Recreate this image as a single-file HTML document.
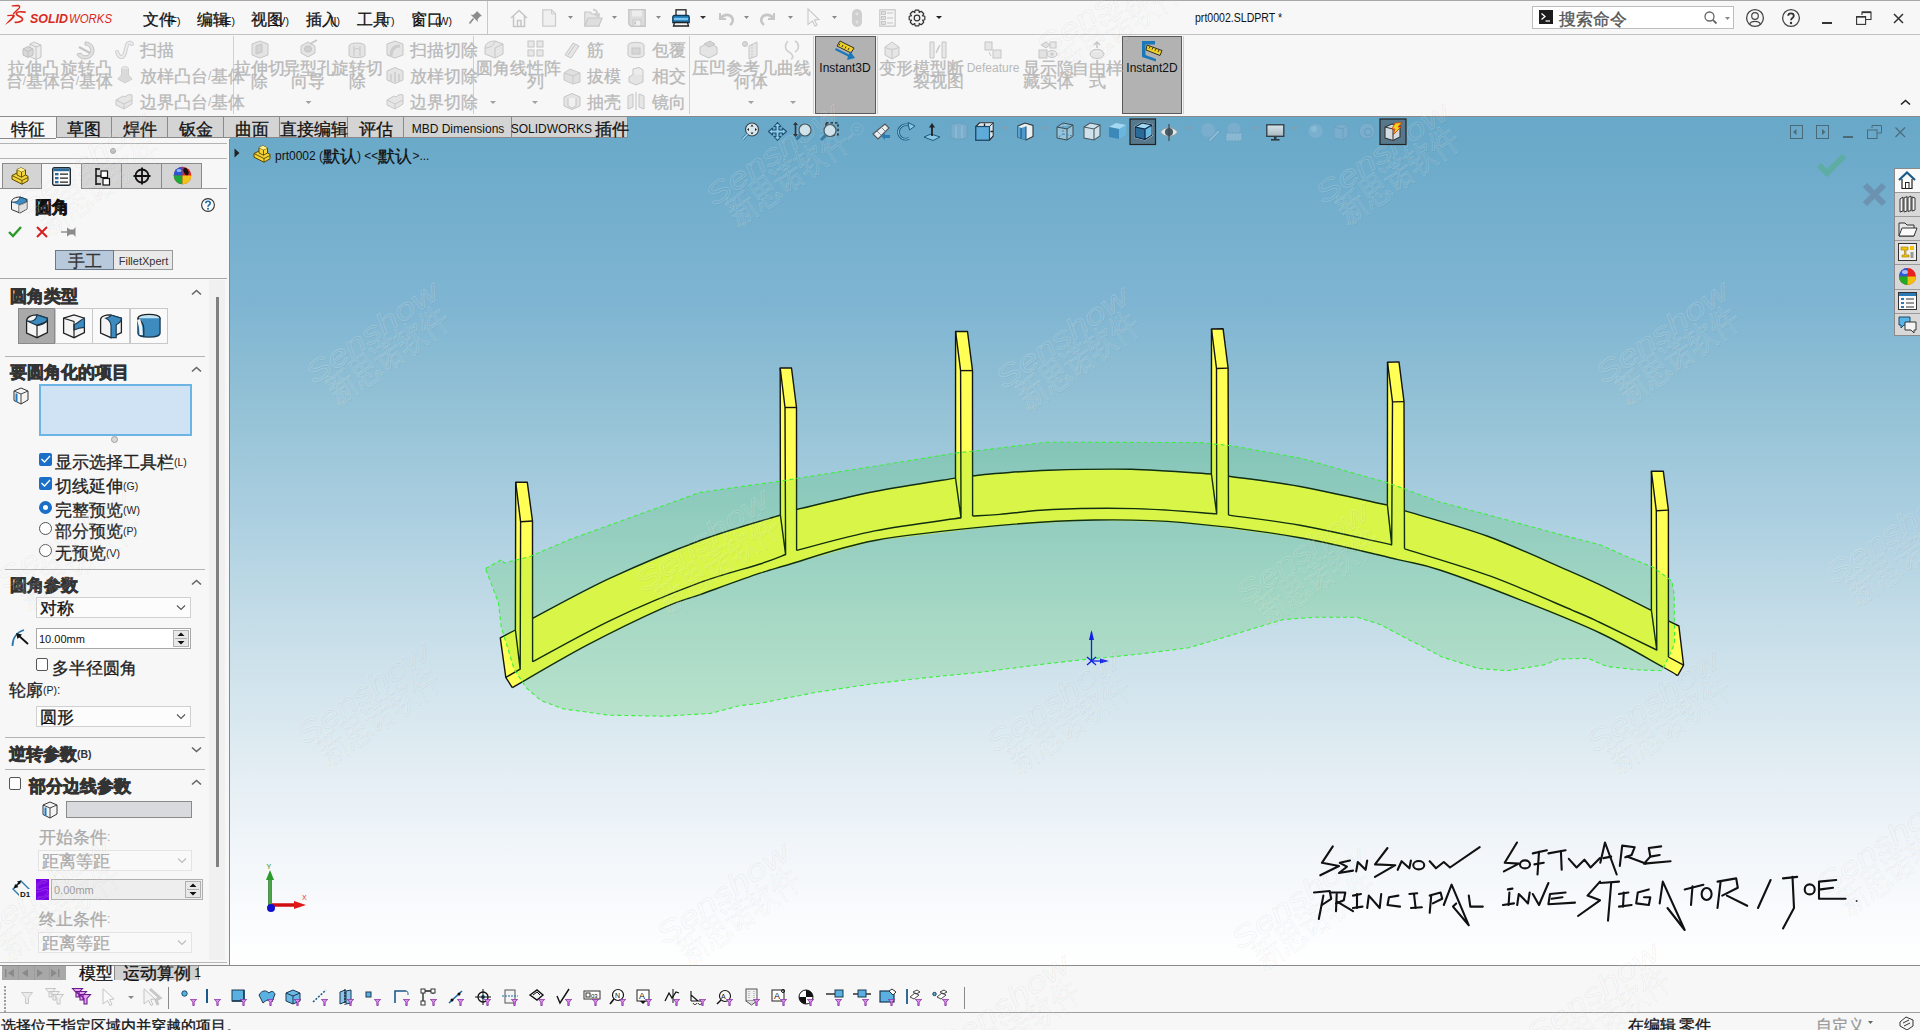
<!DOCTYPE html>
<html><head><meta charset="utf-8"><title>SOLIDWORKS</title>
<style>
html,body{margin:0;padding:0}
body{width:1920px;height:1030px;overflow:hidden;position:relative;background:#f7f7f7;font-family:"Liberation Sans",sans-serif}
body>div{position:absolute}
.t{white-space:nowrap}
.c{line-height:0;vertical-align:-1.5px;-webkit-text-stroke:0.3px currentColor}
.b .c{-webkit-text-stroke:0.75px currentColor}
</style></head><body>
<div style="left:0px;top:0px;width:1920px;height:1px;background:#a8a8a8;"></div>
<div style="left:0px;top:34px;width:1920px;height:1px;background:#c2c2c2;"></div>
<div style="left:487px;top:1px;width:1px;height:33px;background:#c8c8c8;"></div>
<div style="left:0px;top:116px;width:1920px;height:1px;background:#8a8a8a;"></div>
<div style="left:233px;top:36px;width:1px;height:78px;background:#d0d0d0;"></div>
<div style="left:473px;top:36px;width:1px;height:78px;background:#d0d0d0;"></div>
<div style="left:689px;top:36px;width:1px;height:78px;background:#d0d0d0;"></div>
<div style="left:813px;top:36px;width:1px;height:78px;background:#d0d0d0;"></div>
<div style="left:877px;top:36px;width:1px;height:78px;background:#d0d0d0;"></div>
<div style="left:815px;top:36px;width:59px;height:76px;background:#b2b2b2;border:1px solid #5a5a5a"></div>
<div style="left:1122px;top:36px;width:58px;height:76px;background:#b2b2b2;border:1px solid #5a5a5a"></div>
<div style="left:1183px;top:36px;width:1px;height:78px;background:#d0d0d0;"></div>
<div style="left:230px;top:117px;width:1690px;height:848px;background:linear-gradient(to bottom,#68a8c8 0px,#7fb5d2 188px,#93c1d5 286px,#aacee0 393px,#c5dde8 506px,#e0ecf2 638px,#f2f6fa 736px,#fcfdfe 823px,#ffffff 848px)"></div>
<svg style="position:absolute;left:0;top:0" width="1920" height="1030" viewBox="0 0 1920 1030"><polygon points="500.3,637.8 515.4,630.0 532.6,618.4 609.1,578.7 701.4,540.0 780.4,515.1 785.0,515.0 796.6,509.5 874.7,491.5 955.5,478.1 972.6,475.8 1000.0,473.2 1048.9,470.2 1131.0,469.3 1211.4,474.0 1228.5,476.3 1300.0,486.5 1387.4,505.1 1404.5,510.7 1487.0,536.0 1567.3,570.1 1600.0,584.9 1651.4,610.4 1668.4,620.9 1678.9,626.0 1683.6,665.2 1677.7,675.7 1663.8,667.5 1677.7,675.7 1663.8,667.5 1600.0,633.0 1520.2,599.8 1439.8,570.0 1397.9,559.6 1300.0,537.7 1183.5,522.6 1094.4,520.0 1000.0,525.4 874.7,540.5 787.4,565.0 760.0,573.2 700.0,594.6 664.5,607.3 587.0,645.1 512.3,687.6 505.8,677.4" fill="#ffff55"/>
<polygon points="515.7,482.3 527.3,482.3 532.5,521.0 532.6,661.7 520.2,669.1 515.4,630.0" fill="#ffff55"/>
<polygon points="780.2,368.0 791.5,368.0 796.5,407.5 796.6,550.4 785.6,554.5 780.4,515.1" fill="#ffff55"/>
<polygon points="955.6,331.5 967.5,331.5 972.5,370.6 972.6,516.0 961.0,517.8 955.5,478.1" fill="#ffff55"/>
<polygon points="1211.5,329.0 1223.1,328.8 1228.1,368.1 1228.5,515.1 1216.7,513.9 1211.4,474.0" fill="#ffff55"/>
<polygon points="1387.5,362.2 1399.0,361.9 1404.0,401.6 1404.5,548.8 1391.7,544.7 1387.4,505.1" fill="#ffff55"/>
<polygon points="1651.4,471.2 1663.3,471.2 1668.4,510.1 1668.4,657.0 1656.8,650.0 1651.4,610.4" fill="#ffff55"/>
<path d="M532.6,618.4 C545.4,611.8 581.0,591.8 609.1,578.7 C637.2,565.6 672.9,550.6 701.4,540.0 C729.9,529.4 767.2,519.2 780.4,515.1" fill="none" stroke="#141414" stroke-width="1.4" stroke-linejoin="round"/>
<path d="M796.6,509.5 C809.6,506.5 848.2,496.7 874.7,491.5 C901.2,486.3 942.0,480.3 955.5,478.1" fill="none" stroke="#141414" stroke-width="1.4" stroke-linejoin="round"/>
<path d="M972.6,475.8 C977.2,475.4 987.3,474.1 1000.0,473.2 C1012.7,472.3 1027.1,470.8 1048.9,470.2 C1070.7,469.6 1103.9,468.7 1131.0,469.3 C1158.1,469.9 1198.0,473.2 1211.4,474.0" fill="none" stroke="#141414" stroke-width="1.4" stroke-linejoin="round"/>
<path d="M1228.5,476.3 C1240.4,478.0 1273.5,481.7 1300.0,486.5 C1326.5,491.3 1372.8,502.0 1387.4,505.1" fill="none" stroke="#141414" stroke-width="1.4" stroke-linejoin="round"/>
<path d="M1404.5,510.7 C1418.2,514.9 1459.9,526.1 1487.0,536.0 C1514.1,545.9 1548.5,562.0 1567.3,570.1 C1586.1,578.2 1586.0,578.2 1600.0,584.9 C1614.0,591.6 1642.8,606.1 1651.4,610.4" fill="none" stroke="#141414" stroke-width="1.4" stroke-linejoin="round"/>
<path d="M532.6,661.7 C546.0,654.6 585.3,632.3 612.8,619.3 C640.3,606.2 673.2,592.6 697.7,583.4 C722.2,574.2 745.4,568.8 760.0,564.0 C774.6,559.2 781.3,556.1 785.6,554.5" fill="none" stroke="#141414" stroke-width="1.4" stroke-linejoin="round"/>
<path d="M796.6,550.4 C809.6,547.1 847.3,536.3 874.7,530.9 C902.1,525.5 946.6,520.0 961.0,517.8" fill="none" stroke="#141414" stroke-width="1.4" stroke-linejoin="round"/>
<path d="M972.6,516.0 C977.2,515.7 986.7,515.5 1000.0,514.4 C1013.3,513.3 1029.8,510.5 1052.4,509.5 C1075.0,508.5 1108.0,507.9 1135.4,508.6 C1162.8,509.3 1203.2,513.0 1216.7,513.9" fill="none" stroke="#141414" stroke-width="1.4" stroke-linejoin="round"/>
<path d="M1228.5,515.1 C1240.4,516.8 1272.8,520.4 1300.0,525.3 C1327.2,530.2 1376.4,541.5 1391.7,544.7" fill="none" stroke="#141414" stroke-width="1.4" stroke-linejoin="round"/>
<path d="M1404.5,548.8 C1418.8,553.4 1462.5,566.0 1490.5,576.2 C1518.5,586.5 1554.3,602.6 1572.6,610.3 C1590.8,618.0 1586.0,615.9 1600.0,622.5 C1614.0,629.1 1647.3,645.4 1656.8,650.0" fill="none" stroke="#141414" stroke-width="1.4" stroke-linejoin="round"/>
<path d="M512.3,687.6 C524.8,680.5 561.6,658.5 587.0,645.1 C612.4,631.7 645.7,615.7 664.5,607.3 C683.3,598.9 684.1,600.3 700.0,594.6 C715.9,588.9 745.4,578.1 760.0,573.2 C774.6,568.3 768.3,570.5 787.4,565.0 C806.5,559.5 839.3,547.1 874.7,540.5 C910.1,533.9 963.4,528.8 1000.0,525.4 C1036.6,522.0 1063.8,520.5 1094.4,520.0 C1125.0,519.5 1149.2,519.6 1183.5,522.6 C1217.8,525.6 1264.3,531.5 1300.0,537.7 C1335.7,543.9 1374.6,554.2 1397.9,559.6 C1421.2,565.0 1419.4,563.3 1439.8,570.0 C1460.2,576.7 1493.5,589.3 1520.2,599.8 C1546.9,610.3 1576.1,621.7 1600.0,633.0 C1623.9,644.3 1650.8,660.4 1663.8,667.5 C1676.8,674.6 1675.4,674.3 1677.7,675.7" fill="none" stroke="#141414" stroke-width="1.4" stroke-linejoin="round"/>
<polyline points="515.4,630.0 515.7,482.3 527.3,482.3 532.5,521.0 532.6,661.7" fill="none" stroke="#141414" stroke-width="1.4" stroke-linejoin="round"/>
<polyline points="515.7,482.3 520.6,521.8 520.2,669.1 515.4,630.0" fill="none" stroke="#141414" stroke-width="1.4" stroke-linejoin="round"/>
<polyline points="520.6,521.8 532.5,521.0" fill="none" stroke="#141414" stroke-width="1.4" stroke-linejoin="round"/>
<polyline points="780.4,515.1 780.2,368.0 791.5,368.0 796.5,407.5 796.6,550.4" fill="none" stroke="#141414" stroke-width="1.4" stroke-linejoin="round"/>
<polyline points="780.2,368.0 785.0,407.5 785.6,554.5 780.4,515.1" fill="none" stroke="#141414" stroke-width="1.4" stroke-linejoin="round"/>
<polyline points="785.0,407.5 796.5,407.5" fill="none" stroke="#141414" stroke-width="1.4" stroke-linejoin="round"/>
<polyline points="955.5,478.1 955.6,331.5 967.5,331.5 972.5,370.6 972.6,516.0" fill="none" stroke="#141414" stroke-width="1.4" stroke-linejoin="round"/>
<polyline points="955.6,331.5 960.6,370.6 961.0,517.8 955.5,478.1" fill="none" stroke="#141414" stroke-width="1.4" stroke-linejoin="round"/>
<polyline points="960.6,370.6 972.5,370.6" fill="none" stroke="#141414" stroke-width="1.4" stroke-linejoin="round"/>
<polyline points="1211.4,474.0 1211.5,329.0 1223.1,328.8 1228.1,368.1 1228.5,515.1" fill="none" stroke="#141414" stroke-width="1.4" stroke-linejoin="round"/>
<polyline points="1211.5,329.0 1216.5,368.5 1216.7,513.9 1211.4,474.0" fill="none" stroke="#141414" stroke-width="1.4" stroke-linejoin="round"/>
<polyline points="1216.5,368.5 1228.1,368.1" fill="none" stroke="#141414" stroke-width="1.4" stroke-linejoin="round"/>
<polyline points="1387.4,505.1 1387.5,362.2 1399.0,361.9 1404.0,401.6 1404.5,548.8" fill="none" stroke="#141414" stroke-width="1.4" stroke-linejoin="round"/>
<polyline points="1387.5,362.2 1392.5,401.9 1391.7,544.7 1387.4,505.1" fill="none" stroke="#141414" stroke-width="1.4" stroke-linejoin="round"/>
<polyline points="1392.5,401.9 1404.0,401.6" fill="none" stroke="#141414" stroke-width="1.4" stroke-linejoin="round"/>
<polyline points="1651.4,610.4 1651.4,471.2 1663.3,471.2 1668.4,510.1 1668.4,657.0" fill="none" stroke="#141414" stroke-width="1.4" stroke-linejoin="round"/>
<polyline points="1651.4,471.2 1656.3,510.8 1656.8,650.0 1651.4,610.4" fill="none" stroke="#141414" stroke-width="1.4" stroke-linejoin="round"/>
<polyline points="1656.3,510.8 1668.4,510.1" fill="none" stroke="#141414" stroke-width="1.4" stroke-linejoin="round"/>
<polyline points="515.4,630.0 500.3,637.8 505.8,677.4 520.2,669.1" fill="none" stroke="#141414" stroke-width="1.4" stroke-linejoin="round"/>
<polyline points="505.8,677.4 512.3,687.6" fill="none" stroke="#141414" stroke-width="1.4" stroke-linejoin="round"/>
<polyline points="1668.4,620.9 1678.9,626.0 1683.6,665.2 1677.7,675.7" fill="none" stroke="#141414" stroke-width="1.4" stroke-linejoin="round"/>
<polyline points="1668.4,657.0 1683.6,665.2" fill="none" stroke="#141414" stroke-width="1.4" stroke-linejoin="round"/>
<polygon points="485.5,568.6 502.1,559.4 504.0,563.0 529.8,556.6 568.5,540.0 700.0,492.4 776.9,481.6 874.7,466.2 955.5,453.1 1000.0,448.0 1047.0,442.2 1201.0,442.6 1230.6,445.7 1300.0,458.0 1387.4,482.7 1439.8,502.0 1492.2,516.0 1560.0,534.6 1600.0,544.7 1630.0,558.0 1653.3,567.3 1672.0,581.2 1674.2,595.2 1674.5,643.8 1668.0,658.3 1662.1,670.7 1638.8,670.0 1606.7,666.4 1587.7,658.3 1558.5,659.1 1544.0,664.9 1507.5,670.7 1478.3,668.5 1441.9,656.9 1420.0,645.2 1408.1,639.4 1380.0,624.4 1357.5,617.3 1314.4,617.3 1282.5,619.7 1230.0,635.6 1188.8,647.8 1136.3,654.4 1080.0,660.0 1049.4,663.4 983.8,671.9 927.5,677.5 871.3,684.0 815.0,692.5 760.0,703.3 740.0,705.6 710.6,713.4 664.5,716.2 609.1,715.2 563.0,708.8 540.9,700.5 526.1,687.6 514.1,669.1 501.2,626.7 498.4,602.7" fill="rgba(0,195,0,0.15)" stroke="#3cf03c" stroke-width="1.1" stroke-dasharray="4 3"/>
<g stroke="#1020e0" stroke-width="1.3" fill="#1020e0"><line x1="1091.5" y1="661" x2="1091.5" y2="632"/><polygon points="1089,640 1094,640 1091.5,630" stroke="none"/><line x1="1091.5" y1="661" x2="1106" y2="661"/><polygon points="1100,658.5 1100,663.5 1109,661" stroke="none"/><line x1="1087" y1="657" x2="1096" y2="665"/><line x1="1087" y1="665" x2="1096" y2="657"/></g></svg>
<div style="left:0px;top:117px;width:230px;height:22px;background:#f7f7f7;"></div>
<div class="t" style="left:-122.0px;width:300px;text-align:center;top:122.84px;font-size:12px;line-height:12px;color:#111;"><span class="c" style="font-size:17.33px">特征</span></div>
<div style="left:56px;top:117px;width:56px;height:21px;background:#d4d4d4;border-right:1px solid #8a8a8a;border-bottom:1px solid #8a8a8a;box-sizing:border-box;border-left:1px solid #8a8a8a;"></div>
<div class="t" style="left:-66.0px;width:300px;text-align:center;top:122.84px;font-size:12px;line-height:12px;color:#111;"><span class="c" style="font-size:17.33px">草图</span></div>
<div style="left:112px;top:117px;width:56px;height:21px;background:#d4d4d4;border-right:1px solid #8a8a8a;border-bottom:1px solid #8a8a8a;box-sizing:border-box;"></div>
<div class="t" style="left:-10.0px;width:300px;text-align:center;top:122.84px;font-size:12px;line-height:12px;color:#111;"><span class="c" style="font-size:17.33px">焊件</span></div>
<div style="left:168px;top:117px;width:56px;height:21px;background:#d4d4d4;border-right:1px solid #8a8a8a;border-bottom:1px solid #8a8a8a;box-sizing:border-box;"></div>
<div class="t" style="left:46.0px;width:300px;text-align:center;top:122.84px;font-size:12px;line-height:12px;color:#111;"><span class="c" style="font-size:17.33px">钣金</span></div>
<div style="left:224px;top:117px;width:56px;height:21px;background:#d4d4d4;border-right:1px solid #8a8a8a;border-bottom:1px solid #8a8a8a;box-sizing:border-box;"></div>
<div class="t" style="left:102.0px;width:300px;text-align:center;top:122.84px;font-size:12px;line-height:12px;color:#111;"><span class="c" style="font-size:17.33px">曲面</span></div>
<div style="left:280px;top:117px;width:68px;height:21px;background:#d4d4d4;border-right:1px solid #8a8a8a;border-bottom:1px solid #8a8a8a;box-sizing:border-box;"></div>
<div class="t" style="left:164.0px;width:300px;text-align:center;top:122.84px;font-size:12px;line-height:12px;color:#111;"><span class="c" style="font-size:17.33px">直接编辑</span></div>
<div style="left:348px;top:117px;width:56px;height:21px;background:#d4d4d4;border-right:1px solid #8a8a8a;border-bottom:1px solid #8a8a8a;box-sizing:border-box;"></div>
<div class="t" style="left:226.0px;width:300px;text-align:center;top:122.84px;font-size:12px;line-height:12px;color:#111;"><span class="c" style="font-size:17.33px">评估</span></div>
<div style="left:404px;top:117px;width:108px;height:21px;background:#d4d4d4;border-right:1px solid #8a8a8a;border-bottom:1px solid #8a8a8a;box-sizing:border-box;"></div>
<div class="t" style="left:308.0px;width:300px;text-align:center;top:122.84px;font-size:12px;line-height:12px;color:#111;">MBD Dimensions</div>
<div style="left:512px;top:117px;width:116px;height:21px;background:#d4d4d4;border-right:1px solid #8a8a8a;border-bottom:1px solid #8a8a8a;box-sizing:border-box;"></div>
<div class="t" style="left:420.0px;width:300px;text-align:center;top:122.84px;font-size:12px;line-height:12px;color:#111;">SOLIDWORKS <span class="c" style="font-size:17.33px">插件</span></div>
<div style="left:0px;top:138px;width:56px;height:1px;background:#8a8a8a;"></div>
<div style="left:0px;top:139px;width:229px;height:826px;background:#f7f7f7;"></div>
<div style="left:229px;top:139px;width:1px;height:827px;background:#8a8a8a;"></div>
<div style="left:0px;top:965px;width:1920px;height:1px;background:#8a8a8a;"></div>
<div style="left:0px;top:143px;width:227px;height:1px;background:#b4b4b4;"></div>
<div style="left:0px;top:158px;width:227px;height:1px;background:#b4b4b4;"></div>
<div style="left:110px;top:148px;width:6px;height:6px;border-radius:50%;background:#c4c4c4;border:1px solid #a8a8a8;box-sizing:border-box"></div>
<div style="left:2px;top:163px;width:40px;height:26px;background:#d4d4d4;border:1px solid #8a8a8a;box-sizing:border-box"></div>
<div style="left:41px;top:163px;width:41px;height:26px;border-top:1px solid #8a8a8a;box-sizing:border-box"></div>
<div style="left:81px;top:163px;width:41px;height:26px;background:#d4d4d4;border:1px solid #8a8a8a;box-sizing:border-box"></div>
<div style="left:121px;top:163px;width:41px;height:26px;background:#d4d4d4;border:1px solid #8a8a8a;box-sizing:border-box"></div>
<div style="left:161px;top:163px;width:41px;height:26px;background:#d4d4d4;border:1px solid #8a8a8a;box-sizing:border-box"></div>
<div style="left:0px;top:188px;width:41px;height:1px;background:#8a8a8a;"></div>
<div style="left:201px;top:188px;width:26px;height:1px;background:#a0a0a0;"></div>
<div style="left:0px;top:966px;width:1920px;height:64px;background:#f7f7f7;"></div>
<div style="left:0px;top:1012px;width:1920px;height:1px;background:#a0a0a0;"></div>
<div class="t" style="left:143px;top:13.34px;font-size:12px;line-height:12px;color:#111;"><span class="c" style="font-size:16.00px">文件</span></div>
<div class="t" style="left:167px;top:15.54px;font-size:10px;line-height:10px;color:#111;"><span style="font-size:10.5px">(F)</span></div>
<div class="t" style="left:197px;top:13.34px;font-size:12px;line-height:12px;color:#111;"><span class="c" style="font-size:16.00px">编辑</span></div>
<div class="t" style="left:221px;top:15.54px;font-size:10px;line-height:10px;color:#111;"><span style="font-size:10.5px">(E)</span></div>
<div class="t" style="left:251px;top:13.34px;font-size:12px;line-height:12px;color:#111;"><span class="c" style="font-size:16.00px">视图</span></div>
<div class="t" style="left:275px;top:15.54px;font-size:10px;line-height:10px;color:#111;"><span style="font-size:10.5px">(V)</span></div>
<div class="t" style="left:306px;top:13.34px;font-size:12px;line-height:12px;color:#111;"><span class="c" style="font-size:16.00px">插入</span></div>
<div class="t" style="left:330px;top:15.54px;font-size:10px;line-height:10px;color:#111;"><span style="font-size:10.5px">(I)</span></div>
<div class="t" style="left:357px;top:13.34px;font-size:12px;line-height:12px;color:#111;"><span class="c" style="font-size:16.00px">工具</span></div>
<div class="t" style="left:381px;top:15.54px;font-size:10px;line-height:10px;color:#111;"><span style="font-size:10.5px">(T)</span></div>
<div class="t" style="left:411px;top:13.34px;font-size:12px;line-height:12px;color:#111;"><span class="c" style="font-size:16.00px">窗口</span></div>
<div class="t" style="left:435px;top:15.54px;font-size:10px;line-height:10px;color:#111;"><span style="font-size:10.5px">(W)</span></div>
<div class="t" style="left:1195px;top:11.84px;font-size:12px;line-height:12px;color:#111;transform:scaleX(0.88);transform-origin:0 0">prt0002.SLDPRT *</div>
<div style="left:1532px;top:6px;width:202px;height:23px;background:#fff;border:1px solid #bdbdbd;box-sizing:border-box"></div>
<div style="left:1539px;top:10px;width:14px;height:14px;background:#1e1e1e;"></div>
<div class="t" style="left:1559px;top:12.84px;font-size:12px;line-height:12px;color:#555;"><span class="c" style="font-size:17.33px">搜索命令</span></div>
<div class="t" style="left:-117px;width:300px;text-align:center;top:61.84px;font-size:12px;line-height:12px;color:#b9b9b9;"><span class="c" style="font-size:17.33px">拉伸凸</span></div>
<div class="t" style="left:-117px;width:300px;text-align:center;top:74.84px;font-size:12px;line-height:12px;color:#b9b9b9;"><span class="c" style="font-size:17.33px">台</span>/<span class="c" style="font-size:17.33px">基体</span></div>
<div class="t" style="left:-64px;width:300px;text-align:center;top:61.84px;font-size:12px;line-height:12px;color:#b9b9b9;"><span class="c" style="font-size:17.33px">旋转凸</span></div>
<div class="t" style="left:-64px;width:300px;text-align:center;top:74.84px;font-size:12px;line-height:12px;color:#b9b9b9;"><span class="c" style="font-size:17.33px">台</span>/<span class="c" style="font-size:17.33px">基体</span></div>
<div class="t" style="left:140px;top:43.84px;font-size:12px;line-height:12px;color:#b9b9b9;"><span class="c" style="font-size:17.33px">扫描</span></div>
<div class="t" style="left:140px;top:69.84px;font-size:12px;line-height:12px;color:#b9b9b9;"><span class="c" style="font-size:17.33px">放样凸台</span>/<span class="c" style="font-size:17.33px">基体</span></div>
<div class="t" style="left:140px;top:95.84px;font-size:12px;line-height:12px;color:#b9b9b9;"><span class="c" style="font-size:17.33px">边界凸台</span>/<span class="c" style="font-size:17.33px">基体</span></div>
<div class="t" style="left:109px;width:300px;text-align:center;top:61.84px;font-size:12px;line-height:12px;color:#b9b9b9;"><span class="c" style="font-size:17.33px">拉伸切</span></div>
<div class="t" style="left:109px;width:300px;text-align:center;top:74.84px;font-size:12px;line-height:12px;color:#b9b9b9;"><span class="c" style="font-size:17.33px">除</span></div>
<div class="t" style="left:158px;width:300px;text-align:center;top:61.84px;font-size:12px;line-height:12px;color:#b9b9b9;"><span class="c" style="font-size:17.33px">异型孔</span></div>
<div class="t" style="left:158px;width:300px;text-align:center;top:74.84px;font-size:12px;line-height:12px;color:#b9b9b9;"><span class="c" style="font-size:17.33px">向导</span></div>
<div class="t" style="left:207px;width:300px;text-align:center;top:61.84px;font-size:12px;line-height:12px;color:#b9b9b9;"><span class="c" style="font-size:17.33px">旋转切</span></div>
<div class="t" style="left:207px;width:300px;text-align:center;top:74.84px;font-size:12px;line-height:12px;color:#b9b9b9;"><span class="c" style="font-size:17.33px">除</span></div>
<div class="t" style="left:410px;top:43.84px;font-size:12px;line-height:12px;color:#b9b9b9;"><span class="c" style="font-size:17.33px">扫描切除</span></div>
<div class="t" style="left:410px;top:69.84px;font-size:12px;line-height:12px;color:#b9b9b9;"><span class="c" style="font-size:17.33px">放样切除</span></div>
<div class="t" style="left:410px;top:95.84px;font-size:12px;line-height:12px;color:#b9b9b9;"><span class="c" style="font-size:17.33px">边界切除</span></div>
<div class="t" style="left:343px;width:300px;text-align:center;top:61.84px;font-size:12px;line-height:12px;color:#b9b9b9;"><span class="c" style="font-size:17.33px">圆角</span></div>
<div class="t" style="left:385px;width:300px;text-align:center;top:61.84px;font-size:12px;line-height:12px;color:#b9b9b9;"><span class="c" style="font-size:17.33px">线性阵</span></div>
<div class="t" style="left:385px;width:300px;text-align:center;top:74.84px;font-size:12px;line-height:12px;color:#b9b9b9;"><span class="c" style="font-size:17.33px">列</span></div>
<div class="t" style="left:587px;top:43.84px;font-size:12px;line-height:12px;color:#b9b9b9;"><span class="c" style="font-size:17.33px">筋</span></div>
<div class="t" style="left:587px;top:69.84px;font-size:12px;line-height:12px;color:#b9b9b9;"><span class="c" style="font-size:17.33px">拔模</span></div>
<div class="t" style="left:587px;top:95.84px;font-size:12px;line-height:12px;color:#b9b9b9;"><span class="c" style="font-size:17.33px">抽壳</span></div>
<div class="t" style="left:652px;top:43.84px;font-size:12px;line-height:12px;color:#b9b9b9;"><span class="c" style="font-size:17.33px">包覆</span></div>
<div class="t" style="left:652px;top:69.84px;font-size:12px;line-height:12px;color:#b9b9b9;"><span class="c" style="font-size:17.33px">相交</span></div>
<div class="t" style="left:652px;top:95.84px;font-size:12px;line-height:12px;color:#b9b9b9;"><span class="c" style="font-size:17.33px">镜向</span></div>
<div class="t" style="left:559px;width:300px;text-align:center;top:61.84px;font-size:12px;line-height:12px;color:#b9b9b9;"><span class="c" style="font-size:17.33px">压凹</span></div>
<div class="t" style="left:601px;width:300px;text-align:center;top:61.84px;font-size:12px;line-height:12px;color:#b9b9b9;"><span class="c" style="font-size:17.33px">参考几</span></div>
<div class="t" style="left:601px;width:300px;text-align:center;top:74.84px;font-size:12px;line-height:12px;color:#b9b9b9;"><span class="c" style="font-size:17.33px">何体</span></div>
<div class="t" style="left:644px;width:300px;text-align:center;top:61.84px;font-size:12px;line-height:12px;color:#b9b9b9;"><span class="c" style="font-size:17.33px">曲线</span></div>
<div class="t" style="left:695px;width:300px;text-align:center;top:61.84px;font-size:12px;line-height:12px;color:#111;">Instant3D</div>
<div class="t" style="left:746px;width:300px;text-align:center;top:61.84px;font-size:12px;line-height:12px;color:#b9b9b9;"><span class="c" style="font-size:17.33px">变形</span></div>
<div class="t" style="left:788px;width:300px;text-align:center;top:61.84px;font-size:12px;line-height:12px;color:#b9b9b9;"><span class="c" style="font-size:17.33px">模型断</span></div>
<div class="t" style="left:788px;width:300px;text-align:center;top:74.84px;font-size:12px;line-height:12px;color:#b9b9b9;"><span class="c" style="font-size:17.33px">裂视图</span></div>
<div class="t" style="left:843px;width:300px;text-align:center;top:61.84px;font-size:12px;line-height:12px;color:#b9b9b9;">Defeature</div>
<div class="t" style="left:898px;width:300px;text-align:center;top:61.84px;font-size:12px;line-height:12px;color:#b9b9b9;"><span class="c" style="font-size:17.33px">显示隐</span></div>
<div class="t" style="left:898px;width:300px;text-align:center;top:74.84px;font-size:12px;line-height:12px;color:#b9b9b9;"><span class="c" style="font-size:17.33px">藏实体</span></div>
<div class="t" style="left:947px;width:300px;text-align:center;top:61.84px;font-size:12px;line-height:12px;color:#b9b9b9;"><span class="c" style="font-size:17.33px">自由样</span></div>
<div class="t" style="left:947px;width:300px;text-align:center;top:74.84px;font-size:12px;line-height:12px;color:#b9b9b9;"><span class="c" style="font-size:17.33px">式</span></div>
<div class="t" style="left:1002px;width:300px;text-align:center;top:61.84px;font-size:12px;line-height:12px;color:#111;">Instant2D</div>
<div class="t" style="left:275px;top:149.84px;font-size:12px;line-height:12px;color:#111;">prt0002 (<span class="c" style="font-size:17.33px">默认</span>) &lt;&lt;<span class="c" style="font-size:17.33px">默认</span>&gt;...</div>
<div class="t b" style="left:35px;top:200.84px;font-size:12px;line-height:12px;color:#111;font-weight:bold;"><span class="c" style="font-size:17.33px">圆角</span></div>
<div style="left:55px;top:250px;width:59px;height:20px;background:#b9c9dc;border:1px solid #6a7a8a;box-sizing:border-box"></div>
<div style="left:114px;top:250px;width:59px;height:20px;background:#e9e9e9;border:1px solid #9a9a9a;border-left:none;box-sizing:border-box"></div>
<div class="t" style="left:-65.5px;width:300px;text-align:center;top:254.84px;font-size:12px;line-height:12px;color:#333;"><span class="c" style="font-size:17.33px">手工</span></div>
<div class="t" style="left:-6.5px;width:300px;text-align:center;top:255.69px;font-size:11px;line-height:11px;color:#333;">FilletXpert</div>
<div style="left:0px;top:278px;width:227px;height:1px;background:#a8a8a8;"></div>
<div style="left:209px;top:280px;width:16px;height:680px;background:#f0f0f0;"></div>
<div style="left:216px;top:297px;width:3px;height:570px;background:#808080;"></div>
<div class="t b" style="left:10px;top:289.84px;font-size:12px;line-height:12px;color:#333;font-weight:bold;"><span class="c" style="font-size:17.33px">圆角类型</span></div>
<div style="left:18px;top:308px;width:37px;height:36px;background:#a9a9a9;border:1px solid #8a8a8a;box-sizing:border-box"></div>
<div style="left:55px;top:308px;width:38px;height:36px;background:#fafafa;border:1px solid #c8c8c8;box-sizing:border-box"></div>
<div style="left:92px;top:308px;width:38px;height:36px;background:#fafafa;border:1px solid #c8c8c8;box-sizing:border-box"></div>
<div style="left:130px;top:308px;width:38px;height:36px;background:#fafafa;border:1px solid #c8c8c8;box-sizing:border-box"></div>
<div style="left:5px;top:356px;width:200px;height:1px;background:#b4b4b4;"></div>
<div class="t b" style="left:10px;top:365.84px;font-size:12px;line-height:12px;color:#333;font-weight:bold;"><span class="c" style="font-size:17.33px">要圆角化的项目</span></div>
<div style="left:39px;top:384px;width:153px;height:52px;background:#cfe3f5;border:2px solid #6cb4e6;box-sizing:border-box"></div>
<div style="left:111px;top:436px;width:7px;height:7px;border-radius:50%;background:#d8d8d8;border:1px solid #a0a0a0;box-sizing:border-box"></div>
<div style="left:39px;top:453px;width:13px;height:13px;background:#1a6fc9;border-radius:2px"></div>
<div class="t" style="left:55px;top:455.84px;font-size:12px;line-height:12px;color:#222;"><span class="c" style="font-size:17.33px">显示选择工具栏</span><span style="font-size:10.5px">(L)</span></div>
<div style="left:39px;top:477px;width:13px;height:13px;background:#1a6fc9;border-radius:2px"></div>
<div class="t" style="left:55px;top:479.84px;font-size:12px;line-height:12px;color:#222;"><span class="c" style="font-size:17.33px">切线延伸</span><span style="font-size:10.5px">(G)</span></div>
<div style="left:39px;top:501px;width:13px;height:13px;background:#fff;border:4px solid #1a6fc9;border-radius:50%;box-sizing:border-box"></div>
<div class="t" style="left:55px;top:503.84px;font-size:12px;line-height:12px;color:#222;"><span class="c" style="font-size:17.33px">完整预览</span><span style="font-size:10.5px">(W)</span></div>
<div style="left:39px;top:522px;width:13px;height:13px;background:#fff;border:1px solid #555;border-radius:50%;box-sizing:border-box"></div>
<div class="t" style="left:55px;top:524.84px;font-size:12px;line-height:12px;color:#222;"><span class="c" style="font-size:17.33px">部分预览</span><span style="font-size:10.5px">(P)</span></div>
<div style="left:39px;top:544px;width:13px;height:13px;background:#fff;border:1px solid #555;border-radius:50%;box-sizing:border-box"></div>
<div class="t" style="left:55px;top:546.84px;font-size:12px;line-height:12px;color:#222;"><span class="c" style="font-size:17.33px">无预览</span><span style="font-size:10.5px">(V)</span></div>
<div style="left:5px;top:569px;width:200px;height:1px;background:#b4b4b4;"></div>
<div class="t b" style="left:10px;top:578.84px;font-size:12px;line-height:12px;color:#333;font-weight:bold;"><span class="c" style="font-size:17.33px">圆角参数</span></div>
<div style="left:36px;top:597px;width:155px;height:21px;background:#fcfcfc;border:1px solid #d0d0d0;box-sizing:border-box"></div>
<div class="t" style="left:40px;top:601.84px;font-size:12px;line-height:12px;color:#111;"><span class="c" style="font-size:17.33px">对称</span></div>
<div style="left:36px;top:628px;width:155px;height:21px;background:#fff;border:1px solid #a8a8a8;box-sizing:border-box"></div>
<div class="t" style="left:39px;top:633.69px;font-size:11px;line-height:11px;color:#111;">10.00mm</div>
<div style="left:173px;top:630px;width:16px;height:17px;background:#e8e8e8;border:1px solid #b0b0b0;box-sizing:border-box"></div>
<div style="left:36px;top:658px;width:12px;height:13px;background:#fff;border:1px solid #555;border-radius:2px;box-sizing:border-box"></div>
<div class="t" style="left:52px;top:661.84px;font-size:12px;line-height:12px;color:#222;"><span class="c" style="font-size:17.33px">多半径圆角</span></div>
<div class="t" style="left:9px;top:683.84px;font-size:12px;line-height:12px;color:#222;"><span class="c" style="font-size:17.33px">轮廓</span><span style="font-size:10.5px">(P)</span>:</div>
<div style="left:36px;top:706px;width:155px;height:21px;background:#fcfcfc;border:1px solid #d0d0d0;box-sizing:border-box"></div>
<div class="t" style="left:40px;top:710.84px;font-size:12px;line-height:12px;color:#111;"><span class="c" style="font-size:17.33px">圆形</span></div>
<div style="left:5px;top:737px;width:200px;height:1px;background:#b4b4b4;"></div>
<div class="t b" style="left:9px;top:747.84px;font-size:12px;line-height:12px;color:#333;font-weight:bold;"><span class="c" style="font-size:17.33px">逆转参数</span><span style="font-size:10.5px">(B)</span></div>
<div style="left:5px;top:769px;width:200px;height:1px;background:#b4b4b4;"></div>
<div style="left:9px;top:777px;width:12px;height:13px;background:#fff;border:1px solid #555;border-radius:2px;box-sizing:border-box"></div>
<div class="t b" style="left:29px;top:779.84px;font-size:12px;line-height:12px;color:#333;font-weight:bold;"><span class="c" style="font-size:17.33px">部分边线参数</span></div>
<div style="left:66px;top:801px;width:126px;height:17px;background:#d8dadd;border:1px solid #8a8a8a;box-sizing:border-box"></div>
<div class="t" style="left:39px;top:830.84px;font-size:12px;line-height:12px;color:#aaa;"><span class="c" style="font-size:17.33px">开始条件</span>:</div>
<div style="left:38px;top:850px;width:154px;height:21px;background:#f9f9f9;border:1px solid #e4e4e4;box-sizing:border-box"></div>
<div class="t" style="left:42px;top:854.84px;font-size:12px;line-height:12px;color:#aaa;"><span class="c" style="font-size:17.33px">距离等距</span></div>
<div style="left:36px;top:879px;width:13px;height:21px;background:#7a00e6;"></div>
<div style="left:51px;top:879px;width:152px;height:21px;background:#eeeeee;border:1px solid #b0b0b0;box-sizing:border-box"></div>
<div class="t" style="left:54px;top:884.69px;font-size:11px;line-height:11px;color:#9a9a9a;">0.00mm</div>
<div style="left:185px;top:881px;width:16px;height:17px;background:#e8e8e8;border:1px solid #b0b0b0;box-sizing:border-box"></div>
<div class="t" style="left:39px;top:912.84px;font-size:12px;line-height:12px;color:#aaa;"><span class="c" style="font-size:17.33px">终止条件</span>:</div>
<div style="left:38px;top:932px;width:154px;height:21px;background:#f9f9f9;border:1px solid #e4e4e4;box-sizing:border-box"></div>
<div class="t" style="left:42px;top:936.84px;font-size:12px;line-height:12px;color:#aaa;"><span class="c" style="font-size:17.33px">距离等距</span></div>
<div style="left:0px;top:962px;width:227px;height:1px;background:#b8b8b8;"></div>
<div style="left:2px;top:966px;width:64px;height:14px;background:#a8a8a8;"></div>
<div class="t" style="left:79px;top:966.84px;font-size:12px;line-height:12px;color:#111;"><span class="c" style="font-size:17.33px">模型</span></div>
<div style="left:114px;top:966px;width:85px;height:14px;background:#d0d0d0;border-left:1px solid #8a8a8a;border-right:1px solid #8a8a8a;box-sizing:border-box"></div>
<div class="t" style="left:123px;top:966.84px;font-size:12px;line-height:12px;color:#111;"><span class="c" style="font-size:17.33px">运动算例</span> 1</div>
<div class="t" style="left:1px;top:1018.84px;font-size:12px;line-height:12px;color:#111;"><span class="c" style="font-size:15.47px">选择位于指定区域内并穿越的项目。</span></div>
<div class="t" style="left:1628px;top:1018.84px;font-size:12px;line-height:12px;color:#111;"><span class="c" style="font-size:16.00px">在编辑</span> <span class="c" style="font-size:16.00px">零件</span></div>
<div class="t" style="left:1816px;top:1018.84px;font-size:12px;line-height:12px;color:#999;"><span class="c" style="font-size:16.00px">自定义</span></div>
<svg style="position:absolute;left:0;top:0" width="1920" height="1030" viewBox="0 0 1920 1030"><defs>
<linearGradient id="gblue" x1="0" y1="0" x2="0" y2="1"><stop offset="0" stop-color="#a8dcf4"/><stop offset="1" stop-color="#3c8cc0"/></linearGradient>
<linearGradient id="gblueh" x1="0" y1="0" x2="1" y2="0"><stop offset="0" stop-color="#2a6a98"/><stop offset="1" stop-color="#8ccaee"/></linearGradient>
<linearGradient id="ggray" x1="0" y1="0" x2="0" y2="1"><stop offset="0" stop-color="#f0f0f0"/><stop offset="1" stop-color="#c8c8c8"/></linearGradient>
<linearGradient id="gyel" x1="0" y1="0" x2="0" y2="1"><stop offset="0" stop-color="#fff07a"/><stop offset="1" stop-color="#e0b800"/></linearGradient>
<linearGradient id="gmon" x1="0" y1="0" x2="0" y2="1"><stop offset="0" stop-color="#d8e4ea"/><stop offset="1" stop-color="#a8b8c0"/></linearGradient>
<radialGradient id="gball" cx="0.35" cy="0.3" r="0.7"><stop offset="0" stop-color="#ffffff"/><stop offset="0.3" stop-color="#e83030"/><stop offset="1" stop-color="#901010"/></radialGradient>
<symbol id="funnel" viewBox="0 0 10 10"><path d="M0.5,0.5 H9.5 L6,4.5 V9.5 H4 V4.5 Z" fill="#d890e8" stroke="#7a1a9a" stroke-width="1"/></symbol>
<symbol id="pcube" viewBox="0 0 20 20"><path d="M3,6 L10,2.5 L17,6 L17,14 L10,17.5 L3,14 Z" fill="#e2e2e2" stroke="#c4c4c4"/><path d="M3,6 L10,9.5 L17,6 M10,9.5 V17.5" fill="none" stroke="#c4c4c4"/></symbol>
</defs><g transform="translate(24.8,215.8) rotate(-35)" fill="none" stroke="#000" stroke-opacity="0.05" stroke-width="1"><text x="0" y="0" font-family="Liberation Sans" font-style="italic" font-size="29" textLength="155" lengthAdjust="spacingAndGlyphs">Senshow</text><text x="8" y="29" font-family="Liberation Sans" font-size="34" textLength="140" lengthAdjust="spacingAndGlyphs">新思诺软件</text></g><g transform="translate(24.0,215.0) rotate(-35)" fill="none" stroke="#fff" stroke-opacity="0.16" stroke-width="1"><text x="0" y="0" font-family="Liberation Sans" font-style="italic" font-size="29" textLength="155" lengthAdjust="spacingAndGlyphs">Senshow</text><text x="8" y="29" font-family="Liberation Sans" font-size="34" textLength="140" lengthAdjust="spacingAndGlyphs">新思诺软件</text></g><g transform="translate(714.8,207.8) rotate(-35)" fill="none" stroke="#000" stroke-opacity="0.05" stroke-width="1"><text x="0" y="0" font-family="Liberation Sans" font-style="italic" font-size="29" textLength="155" lengthAdjust="spacingAndGlyphs">Senshow</text><text x="8" y="29" font-family="Liberation Sans" font-size="34" textLength="140" lengthAdjust="spacingAndGlyphs">新思诺软件</text></g><g transform="translate(714.0,207.0) rotate(-35)" fill="none" stroke="#fff" stroke-opacity="0.16" stroke-width="1"><text x="0" y="0" font-family="Liberation Sans" font-style="italic" font-size="29" textLength="155" lengthAdjust="spacingAndGlyphs">Senshow</text><text x="8" y="29" font-family="Liberation Sans" font-size="34" textLength="140" lengthAdjust="spacingAndGlyphs">新思诺软件</text></g><g transform="translate(1324.8,205.8) rotate(-35)" fill="none" stroke="#000" stroke-opacity="0.05" stroke-width="1"><text x="0" y="0" font-family="Liberation Sans" font-style="italic" font-size="29" textLength="155" lengthAdjust="spacingAndGlyphs">Senshow</text><text x="8" y="29" font-family="Liberation Sans" font-size="34" textLength="140" lengthAdjust="spacingAndGlyphs">新思诺软件</text></g><g transform="translate(1324.0,205.0) rotate(-35)" fill="none" stroke="#fff" stroke-opacity="0.16" stroke-width="1"><text x="0" y="0" font-family="Liberation Sans" font-style="italic" font-size="29" textLength="155" lengthAdjust="spacingAndGlyphs">Senshow</text><text x="8" y="29" font-family="Liberation Sans" font-size="34" textLength="140" lengthAdjust="spacingAndGlyphs">新思诺软件</text></g><g transform="translate(1044.8,57.8) rotate(-35)" fill="none" stroke="#000" stroke-opacity="0.05" stroke-width="1"><text x="0" y="0" font-family="Liberation Sans" font-style="italic" font-size="29" textLength="155" lengthAdjust="spacingAndGlyphs">Senshow</text><text x="8" y="29" font-family="Liberation Sans" font-size="34" textLength="140" lengthAdjust="spacingAndGlyphs">新思诺软件</text></g><g transform="translate(1044.0,57.0) rotate(-35)" fill="none" stroke="#fff" stroke-opacity="0.16" stroke-width="1"><text x="0" y="0" font-family="Liberation Sans" font-style="italic" font-size="29" textLength="155" lengthAdjust="spacingAndGlyphs">Senshow</text><text x="8" y="29" font-family="Liberation Sans" font-size="34" textLength="140" lengthAdjust="spacingAndGlyphs">新思诺软件</text></g><g transform="translate(314.8,385.8) rotate(-35)" fill="none" stroke="#000" stroke-opacity="0.05" stroke-width="1"><text x="0" y="0" font-family="Liberation Sans" font-style="italic" font-size="29" textLength="155" lengthAdjust="spacingAndGlyphs">Senshow</text><text x="8" y="29" font-family="Liberation Sans" font-size="34" textLength="140" lengthAdjust="spacingAndGlyphs">新思诺软件</text></g><g transform="translate(314.0,385.0) rotate(-35)" fill="none" stroke="#fff" stroke-opacity="0.16" stroke-width="1"><text x="0" y="0" font-family="Liberation Sans" font-style="italic" font-size="29" textLength="155" lengthAdjust="spacingAndGlyphs">Senshow</text><text x="8" y="29" font-family="Liberation Sans" font-size="34" textLength="140" lengthAdjust="spacingAndGlyphs">新思诺软件</text></g><g transform="translate(1004.8,390.8) rotate(-35)" fill="none" stroke="#000" stroke-opacity="0.05" stroke-width="1"><text x="0" y="0" font-family="Liberation Sans" font-style="italic" font-size="29" textLength="155" lengthAdjust="spacingAndGlyphs">Senshow</text><text x="8" y="29" font-family="Liberation Sans" font-size="34" textLength="140" lengthAdjust="spacingAndGlyphs">新思诺软件</text></g><g transform="translate(1004.0,390.0) rotate(-35)" fill="none" stroke="#fff" stroke-opacity="0.16" stroke-width="1"><text x="0" y="0" font-family="Liberation Sans" font-style="italic" font-size="29" textLength="155" lengthAdjust="spacingAndGlyphs">Senshow</text><text x="8" y="29" font-family="Liberation Sans" font-size="34" textLength="140" lengthAdjust="spacingAndGlyphs">新思诺软件</text></g><g transform="translate(1604.8,385.8) rotate(-35)" fill="none" stroke="#000" stroke-opacity="0.05" stroke-width="1"><text x="0" y="0" font-family="Liberation Sans" font-style="italic" font-size="29" textLength="155" lengthAdjust="spacingAndGlyphs">Senshow</text><text x="8" y="29" font-family="Liberation Sans" font-size="34" textLength="140" lengthAdjust="spacingAndGlyphs">新思诺软件</text></g><g transform="translate(1604.0,385.0) rotate(-35)" fill="none" stroke="#fff" stroke-opacity="0.16" stroke-width="1"><text x="0" y="0" font-family="Liberation Sans" font-style="italic" font-size="29" textLength="155" lengthAdjust="spacingAndGlyphs">Senshow</text><text x="8" y="29" font-family="Liberation Sans" font-size="34" textLength="140" lengthAdjust="spacingAndGlyphs">新思诺软件</text></g><g transform="translate(4.8,590.8) rotate(-35)" fill="none" stroke="#000" stroke-opacity="0.05" stroke-width="1"><text x="0" y="0" font-family="Liberation Sans" font-style="italic" font-size="29" textLength="155" lengthAdjust="spacingAndGlyphs">Senshow</text><text x="8" y="29" font-family="Liberation Sans" font-size="34" textLength="140" lengthAdjust="spacingAndGlyphs">新思诺软件</text></g><g transform="translate(4.0,590.0) rotate(-35)" fill="none" stroke="#fff" stroke-opacity="0.16" stroke-width="1"><text x="0" y="0" font-family="Liberation Sans" font-style="italic" font-size="29" textLength="155" lengthAdjust="spacingAndGlyphs">Senshow</text><text x="8" y="29" font-family="Liberation Sans" font-size="34" textLength="140" lengthAdjust="spacingAndGlyphs">新思诺软件</text></g><g transform="translate(644.8,593.8) rotate(-35)" fill="none" stroke="#000" stroke-opacity="0.05" stroke-width="1"><text x="0" y="0" font-family="Liberation Sans" font-style="italic" font-size="29" textLength="155" lengthAdjust="spacingAndGlyphs">Senshow</text><text x="8" y="29" font-family="Liberation Sans" font-size="34" textLength="140" lengthAdjust="spacingAndGlyphs">新思诺软件</text></g><g transform="translate(644.0,593.0) rotate(-35)" fill="none" stroke="#fff" stroke-opacity="0.16" stroke-width="1"><text x="0" y="0" font-family="Liberation Sans" font-style="italic" font-size="29" textLength="155" lengthAdjust="spacingAndGlyphs">Senshow</text><text x="8" y="29" font-family="Liberation Sans" font-size="34" textLength="140" lengthAdjust="spacingAndGlyphs">新思诺软件</text></g><g transform="translate(1244.8,605.8) rotate(-35)" fill="none" stroke="#000" stroke-opacity="0.05" stroke-width="1"><text x="0" y="0" font-family="Liberation Sans" font-style="italic" font-size="29" textLength="155" lengthAdjust="spacingAndGlyphs">Senshow</text><text x="8" y="29" font-family="Liberation Sans" font-size="34" textLength="140" lengthAdjust="spacingAndGlyphs">新思诺软件</text></g><g transform="translate(1244.0,605.0) rotate(-35)" fill="none" stroke="#fff" stroke-opacity="0.16" stroke-width="1"><text x="0" y="0" font-family="Liberation Sans" font-style="italic" font-size="29" textLength="155" lengthAdjust="spacingAndGlyphs">Senshow</text><text x="8" y="29" font-family="Liberation Sans" font-size="34" textLength="140" lengthAdjust="spacingAndGlyphs">新思诺软件</text></g><g transform="translate(1834.8,585.8) rotate(-35)" fill="none" stroke="#000" stroke-opacity="0.05" stroke-width="1"><text x="0" y="0" font-family="Liberation Sans" font-style="italic" font-size="29" textLength="155" lengthAdjust="spacingAndGlyphs">Senshow</text><text x="8" y="29" font-family="Liberation Sans" font-size="34" textLength="140" lengthAdjust="spacingAndGlyphs">新思诺软件</text></g><g transform="translate(1834.0,585.0) rotate(-35)" fill="none" stroke="#fff" stroke-opacity="0.16" stroke-width="1"><text x="0" y="0" font-family="Liberation Sans" font-style="italic" font-size="29" textLength="155" lengthAdjust="spacingAndGlyphs">Senshow</text><text x="8" y="29" font-family="Liberation Sans" font-size="34" textLength="140" lengthAdjust="spacingAndGlyphs">新思诺软件</text></g><g transform="translate(304.8,745.8) rotate(-35)" fill="none" stroke="#000" stroke-opacity="0.05" stroke-width="1"><text x="0" y="0" font-family="Liberation Sans" font-style="italic" font-size="29" textLength="155" lengthAdjust="spacingAndGlyphs">Senshow</text><text x="8" y="29" font-family="Liberation Sans" font-size="34" textLength="140" lengthAdjust="spacingAndGlyphs">新思诺软件</text></g><g transform="translate(304.0,745.0) rotate(-35)" fill="none" stroke="#fff" stroke-opacity="0.16" stroke-width="1"><text x="0" y="0" font-family="Liberation Sans" font-style="italic" font-size="29" textLength="155" lengthAdjust="spacingAndGlyphs">Senshow</text><text x="8" y="29" font-family="Liberation Sans" font-size="34" textLength="140" lengthAdjust="spacingAndGlyphs">新思诺软件</text></g><g transform="translate(994.8,753.8) rotate(-35)" fill="none" stroke="#000" stroke-opacity="0.05" stroke-width="1"><text x="0" y="0" font-family="Liberation Sans" font-style="italic" font-size="29" textLength="155" lengthAdjust="spacingAndGlyphs">Senshow</text><text x="8" y="29" font-family="Liberation Sans" font-size="34" textLength="140" lengthAdjust="spacingAndGlyphs">新思诺软件</text></g><g transform="translate(994.0,753.0) rotate(-35)" fill="none" stroke="#fff" stroke-opacity="0.16" stroke-width="1"><text x="0" y="0" font-family="Liberation Sans" font-style="italic" font-size="29" textLength="155" lengthAdjust="spacingAndGlyphs">Senshow</text><text x="8" y="29" font-family="Liberation Sans" font-size="34" textLength="140" lengthAdjust="spacingAndGlyphs">新思诺软件</text></g><g transform="translate(1594.8,753.8) rotate(-35)" fill="none" stroke="#000" stroke-opacity="0.05" stroke-width="1"><text x="0" y="0" font-family="Liberation Sans" font-style="italic" font-size="29" textLength="155" lengthAdjust="spacingAndGlyphs">Senshow</text><text x="8" y="29" font-family="Liberation Sans" font-size="34" textLength="140" lengthAdjust="spacingAndGlyphs">新思诺软件</text></g><g transform="translate(1594.0,753.0) rotate(-35)" fill="none" stroke="#fff" stroke-opacity="0.16" stroke-width="1"><text x="0" y="0" font-family="Liberation Sans" font-style="italic" font-size="29" textLength="155" lengthAdjust="spacingAndGlyphs">Senshow</text><text x="8" y="29" font-family="Liberation Sans" font-size="34" textLength="140" lengthAdjust="spacingAndGlyphs">新思诺软件</text></g><g transform="translate(-15.2,940.8) rotate(-35)" fill="none" stroke="#000" stroke-opacity="0.05" stroke-width="1"><text x="0" y="0" font-family="Liberation Sans" font-style="italic" font-size="29" textLength="155" lengthAdjust="spacingAndGlyphs">Senshow</text><text x="8" y="29" font-family="Liberation Sans" font-size="34" textLength="140" lengthAdjust="spacingAndGlyphs">新思诺软件</text></g><g transform="translate(-16.0,940.0) rotate(-35)" fill="none" stroke="#fff" stroke-opacity="0.16" stroke-width="1"><text x="0" y="0" font-family="Liberation Sans" font-style="italic" font-size="29" textLength="155" lengthAdjust="spacingAndGlyphs">Senshow</text><text x="8" y="29" font-family="Liberation Sans" font-size="34" textLength="140" lengthAdjust="spacingAndGlyphs">新思诺软件</text></g><g transform="translate(664.8,945.8) rotate(-35)" fill="none" stroke="#000" stroke-opacity="0.05" stroke-width="1"><text x="0" y="0" font-family="Liberation Sans" font-style="italic" font-size="29" textLength="155" lengthAdjust="spacingAndGlyphs">Senshow</text><text x="8" y="29" font-family="Liberation Sans" font-size="34" textLength="140" lengthAdjust="spacingAndGlyphs">新思诺软件</text></g><g transform="translate(664.0,945.0) rotate(-35)" fill="none" stroke="#fff" stroke-opacity="0.16" stroke-width="1"><text x="0" y="0" font-family="Liberation Sans" font-style="italic" font-size="29" textLength="155" lengthAdjust="spacingAndGlyphs">Senshow</text><text x="8" y="29" font-family="Liberation Sans" font-size="34" textLength="140" lengthAdjust="spacingAndGlyphs">新思诺软件</text></g><g transform="translate(1239.8,950.8) rotate(-35)" fill="none" stroke="#000" stroke-opacity="0.05" stroke-width="1"><text x="0" y="0" font-family="Liberation Sans" font-style="italic" font-size="29" textLength="155" lengthAdjust="spacingAndGlyphs">Senshow</text><text x="8" y="29" font-family="Liberation Sans" font-size="34" textLength="140" lengthAdjust="spacingAndGlyphs">新思诺软件</text></g><g transform="translate(1239.0,950.0) rotate(-35)" fill="none" stroke="#fff" stroke-opacity="0.16" stroke-width="1"><text x="0" y="0" font-family="Liberation Sans" font-style="italic" font-size="29" textLength="155" lengthAdjust="spacingAndGlyphs">Senshow</text><text x="8" y="29" font-family="Liberation Sans" font-size="34" textLength="140" lengthAdjust="spacingAndGlyphs">新思诺软件</text></g><g transform="translate(1824.8,895.8) rotate(-35)" fill="none" stroke="#000" stroke-opacity="0.05" stroke-width="1"><text x="0" y="0" font-family="Liberation Sans" font-style="italic" font-size="29" textLength="155" lengthAdjust="spacingAndGlyphs">Senshow</text><text x="8" y="29" font-family="Liberation Sans" font-size="34" textLength="140" lengthAdjust="spacingAndGlyphs">新思诺软件</text></g><g transform="translate(1824.0,895.0) rotate(-35)" fill="none" stroke="#fff" stroke-opacity="0.16" stroke-width="1"><text x="0" y="0" font-family="Liberation Sans" font-style="italic" font-size="29" textLength="155" lengthAdjust="spacingAndGlyphs">Senshow</text><text x="8" y="29" font-family="Liberation Sans" font-size="34" textLength="140" lengthAdjust="spacingAndGlyphs">新思诺软件</text></g><g transform="translate(944.8,1057.8) rotate(-35)" fill="none" stroke="#000" stroke-opacity="0.05" stroke-width="1"><text x="0" y="0" font-family="Liberation Sans" font-style="italic" font-size="29" textLength="155" lengthAdjust="spacingAndGlyphs">Senshow</text><text x="8" y="29" font-family="Liberation Sans" font-size="34" textLength="140" lengthAdjust="spacingAndGlyphs">新思诺软件</text></g><g transform="translate(944.0,1057.0) rotate(-35)" fill="none" stroke="#fff" stroke-opacity="0.16" stroke-width="1"><text x="0" y="0" font-family="Liberation Sans" font-style="italic" font-size="29" textLength="155" lengthAdjust="spacingAndGlyphs">Senshow</text><text x="8" y="29" font-family="Liberation Sans" font-size="34" textLength="140" lengthAdjust="spacingAndGlyphs">新思诺软件</text></g><g transform="translate(1534.8,1045.8) rotate(-35)" fill="none" stroke="#000" stroke-opacity="0.05" stroke-width="1"><text x="0" y="0" font-family="Liberation Sans" font-style="italic" font-size="29" textLength="155" lengthAdjust="spacingAndGlyphs">Senshow</text><text x="8" y="29" font-family="Liberation Sans" font-size="34" textLength="140" lengthAdjust="spacingAndGlyphs">新思诺软件</text></g><g transform="translate(1534.0,1045.0) rotate(-35)" fill="none" stroke="#fff" stroke-opacity="0.16" stroke-width="1"><text x="0" y="0" font-family="Liberation Sans" font-style="italic" font-size="29" textLength="155" lengthAdjust="spacingAndGlyphs">Senshow</text><text x="8" y="29" font-family="Liberation Sans" font-size="34" textLength="140" lengthAdjust="spacingAndGlyphs">新思诺软件</text></g><g fill="none" stroke="#da291c" stroke-linecap="round"><path d="M12.3,5.9 L18.2,5.5 Q20.3,6 19.3,7.9 L13.6,13.6" stroke-width="1.4"/><path d="M25,12.2 C20,11.4 16.6,12 16.3,13.6 C16,15.3 20.4,16.4 22,18 C23.4,19.6 22,21.7 18.2,22.1 L15.3,22.3" stroke-width="1.7"/></g><path d="M7.4,14.9 L14,14.4 C15.3,14.6 15,16.6 13.5,18.3 C11,21.1 8,23.4 5,24.9 C7.4,22 9.8,19.6 11.9,17.3 C12.6,16.4 12.3,16 11.5,16 L7.2,16.3 Z" fill="#da291c"/><text x="30" y="23" font-family="Liberation Sans" font-weight="bold" font-style="italic" font-size="13" fill="#da291c" textLength="38" lengthAdjust="spacingAndGlyphs">SOLID</text><text x="69" y="23" font-family="Liberation Sans" font-style="italic" font-size="13" fill="#da291c" textLength="43" lengthAdjust="spacingAndGlyphs">WORKS</text><g transform="translate(469,10)"><path d="M8,1 L13,6 L11,6.5 L8.5,9.5 L9,12 L1.5,4.5 L4,5 L7,2.5 Z" fill="#8c8c8c"/><path d="M4.5,8.5 L0.5,13.5" stroke="#8c8c8c" stroke-width="1.6"/></g><g transform="translate(510,9)"><path d="M1,9 L9,1.5 L17,9 M3.5,7 V17.5 H14.5 V7 M7.5,17.5 V11.5 H11 V17.5" fill="none" stroke="#c6c6c6" stroke-width="1.5"/></g><g transform="translate(542,9)"><path d="M0.8,0.8 H9.5 L13.5,4.8 V17.2 H0.8 Z" fill="#f0f0f0" stroke="#cdcdcd" stroke-width="1.3"/><path d="M9.5,0.8 V4.8 H13.5" fill="none" stroke="#cdcdcd"/></g><polygon points="568,16 573,16 570.5,19" fill="#8a8a8a"/><g transform="translate(584,9)"><path d="M0.8,3 H6 L8,5 H15 V17 H0.8 Z" fill="#e6e6e6" stroke="#c8c8c8" stroke-width="1.2"/><path d="M0.8,17 L4,9 H18 L15,17 Z" fill="#dedede" stroke="#c8c8c8" stroke-width="1.2"/><path d="M9,0.5 Q14,1 13,6 M10.5,4.5 L13,7 L15.5,4.5" fill="none" stroke="#cfcfcf" stroke-width="1.8"/></g><polygon points="612,16 617,16 614.5,19" fill="#8a8a8a"/><g transform="translate(628,9)"><path d="M0.8,0.8 H17.2 V17.2 H3 L0.8,15 Z" fill="#dcdcdc" stroke="#c6c6c6" stroke-width="1.4"/><rect x="4" y="1.5" width="10" height="6" fill="#ececec"/><rect x="5" y="11" width="8" height="6" fill="#efefef" stroke="#c6c6c6"/><rect x="6.3" y="12.5" width="1.6" height="3" fill="#c0c0c0"/></g><polygon points="656,16 661,16 658.5,19" fill="#8a8a8a"/><g transform="translate(672,9)"><rect x="4" y="0.8" width="10" height="7" fill="#f4f4f4" stroke="#222" stroke-width="1.3"/><path d="M0.8,8 Q0.8,6.5 2.5,6.5 H15.5 Q17.2,6.5 17.2,8 V13.5 H0.8 Z" fill="#2a8ac4" stroke="#0d3a5a" stroke-width="1.3"/><rect x="2" y="9" width="14" height="2" fill="#7cc4ec"/><path d="M2.5,13.5 H15.5 L16.5,17 H1.5 Z" fill="#f4f4f4" stroke="#222" stroke-width="1.3"/></g><polygon points="700,16 706,16 703.0,19" fill="#333"/><g transform="translate(717,10)"><path d="M3,3 V9 H9" fill="none" stroke="#c6c6c6" stroke-width="2"/><path d="M4,8 C7,3.5 14,4 15.5,8.5 C16.3,11 15,13.5 13,15" fill="none" stroke="#c6c6c6" stroke-width="2.6"/></g><polygon points="744,16 749,16 746.5,19" fill="#8a8a8a"/><g transform="translate(761,10)"><path d="M13,3 V9 H7" fill="none" stroke="#c6c6c6" stroke-width="2"/><path d="M12,8 C9,3.5 2,4 0.5,8.5 C-0.3,11 1,13.5 3,15" fill="none" stroke="#c6c6c6" stroke-width="2.6"/></g><polygon points="788,16 793,16 790.5,19" fill="#8a8a8a"/><g transform="translate(807,8)"><path d="M1,0.8 L12,11.5 L7.5,12 L10,17 L8,18 L5.5,13 L1,16.5 Z" fill="#f6f6f6" stroke="#c8c8c8" stroke-width="1.1"/></g><polygon points="832,16 837,16 834.5,19" fill="#8a8a8a"/><g transform="translate(852,9)"><rect x="0" y="0" width="10" height="18" rx="5" fill="#cfcfcf"/><path d="M5,3.5 V6.5 M3.5,5 H6.5 M5,11.5 V14.5 M3.5,13 H6.5" stroke="#e8e8e8" stroke-width="1"/></g><g transform="translate(879,9)"><rect x="0.8" y="0.8" width="15.4" height="16.4" fill="#f4f4f4" stroke="#c8c8c8" stroke-width="1.2"/><g fill="#e0e0e0" stroke="#c4c4c4" stroke-width="0.9"><rect x="2.5" y="2.5" width="4" height="3"/><rect x="2.5" y="7.5" width="4" height="3"/><rect x="2.5" y="12.5" width="4" height="3"/></g><path d="M8,4 H14 M8,9 H14 M8,14 H14" stroke="#c4c4c4" stroke-width="1.1"/></g><g transform="translate(909,10)"><path d="M15.81,6.25 L15.81,9.75 L13.48,10.45 L13.60,10.14 L14.76,12.29 L12.29,14.76 L10.14,13.60 L10.45,13.48 L9.75,15.81 L6.25,15.81 L5.55,13.48 L5.86,13.60 L3.71,14.76 L1.24,12.29 L2.40,10.14 L2.52,10.45 L0.19,9.75 L0.19,6.25 L2.52,5.55 L2.40,5.86 L1.24,3.71 L3.71,1.24 L5.86,2.40 L5.55,2.52 L6.25,0.19 L9.75,0.19 L10.45,2.52 L10.14,2.40 L12.29,1.24 L14.76,3.71 L13.60,5.86 L13.48,5.55Z" fill="#f4f4f4" stroke="#333" stroke-width="1.2" stroke-linejoin="round"/><circle cx="8" cy="8" r="2.8" fill="none" stroke="#333" stroke-width="1.2"/></g><polygon points="936,16 942,16 939.0,19" fill="#222"/><g transform="translate(1539,10)"><rect x="0" y="0" width="14" height="14" fill="#1c1c1c"/><path d="M2.5,3.5 L6,6.5 L2.5,9.5" fill="none" stroke="#fff" stroke-width="1.3"/><path d="M6.5,11 H11" stroke="#fff" stroke-width="1.2"/></g><g transform="translate(1704,11)"><circle cx="5.5" cy="5.5" r="4.5" fill="none" stroke="#666" stroke-width="1.3"/><path d="M8.8,8.8 L12.5,12.5" stroke="#666" stroke-width="1.8"/></g><polygon points="1725,17 1730,17 1727.5,20" fill="#888"/><g transform="translate(1746,9)"><circle cx="9" cy="9" r="8.4" fill="none" stroke="#444" stroke-width="1.3"/><circle cx="9" cy="7" r="3.3" fill="none" stroke="#444" stroke-width="1.2"/><path d="M3.8,15 C5,11.5 13,11.5 14.2,15" fill="none" stroke="#444" stroke-width="1.2"/></g><g transform="translate(1782,9)"><circle cx="9" cy="9" r="8.4" fill="none" stroke="#444" stroke-width="1.3"/><path d="M6.2,6.8 C6.2,3.5 11.8,3.5 11.8,6.8 C11.8,9 9,9 9,11.3" fill="none" stroke="#333" stroke-width="1.8"/><circle cx="9" cy="14" r="1.2" fill="#333"/></g><rect x="1822" y="22" width="10" height="2" fill="#333"/><g transform="translate(1856,11)"><path d="M6,4 V1 H15 V8.5 H10" fill="none" stroke="#333" stroke-width="1.1"/><rect x="6" y="0.5" width="9" height="1.6" fill="#333"/><rect x="0.6" y="5.6" width="9" height="7.8" fill="#f7f7f7" stroke="#333" stroke-width="1.1"/><rect x="0.5" y="5" width="9.5" height="1.6" fill="#333"/></g><g transform="translate(1893,13)"><path d="M1,1 L10,10 M10,1 L1,10" stroke="#333" stroke-width="1.5"/></g><g transform="translate(1900,99)"><path d="M1,5.5 L5.5,1.5 L10,5.5" fill="none" stroke="#222" stroke-width="1.6"/></g><g transform="translate(22,41)"><path d="M8,3 L12,1 L19,4 V16 L14,18.5 L8,15.5 Z" fill="#ececec" stroke="#c4c4c4" stroke-width="1"/><path d="M8,3 L14,6 V18.5 M14,6 L19,4" fill="none" stroke="#c4c4c4"/><path d="M1,8 L6,5.5 L11,8 V14 L6,16.5 L1,14 Z" fill="#d8d8d8" stroke="#c0c0c0"/><path d="M1,8 L6,10.5 L11,8 M6,10.5 V16.5" fill="none" stroke="#c0c0c0"/></g><g transform="translate(76,41)"><path d="M9,1 C15,1 18,5 18,9.5 C18,14.5 14,18 9,18 C5,18 2,16 1,13 L5,12 C6,14 8,15 10,14.8 C13,14.5 14.5,12 14.5,9.5 C14.5,6 12,4 9,4 Z" fill="#e0e0e0" stroke="#c4c4c4"/><path d="M3,6 L14,12" stroke="#c4c4c4" stroke-width="2"/></g><g transform="translate(115,40)"><path d="M2,12 C4,18 8,19 10,13 L12,5 C13,2 16,2 17,4" fill="none" stroke="#d0d0d0" stroke-width="4" stroke-linecap="round"/><path d="M2,12 C4,18 8,19 10,13 L12,5 C13,2 16,2 17,4" fill="none" stroke="#ececec" stroke-width="2" stroke-linecap="round"/></g><g transform="translate(117,66)"><ellipse cx="8" cy="2.5" rx="3.5" ry="1.8" fill="#f0f0f0" stroke="#cfcfcf"/><path d="M4.5,2.5 V9 L0.8,13 L8,17 L15.2,13 L11.5,9 V2.5" fill="#dadada" stroke="#cfcfcf"/></g><g transform="translate(115,92)"><path d="M1,8 L8,4 L10,5 C12,3 14,2 17,3 V12 L9,17 L1,13 Z" fill="#e6e6e6" stroke="#c8c8c8"/><path d="M1,8 L9,12 L17,8 M9,12 V17" fill="none" stroke="#c8c8c8"/></g><g transform="translate(251,40)"><path d="M1,4 L9,1 L17,4 V15 L9,18 L1,15 Z" fill="#e4e4e4" stroke="#c6c6c6"/><path d="M5,6 L11,4 V12 L5,14 Z" fill="#d4d4d4" stroke="#c6c6c6"/></g><g transform="translate(299,40)"><path d="M2,6 L9,2 L16,6 V13 L9,17 L2,13 Z" fill="#e4e4e4" stroke="#c6c6c6"/><ellipse cx="9" cy="9" rx="3.5" ry="3" fill="#d0d0d0" stroke="#c2c2c2"/><path d="M11,4 L18,0" stroke="#c6c6c6" stroke-width="1.5"/></g><polygon points="305.5,101 311.5,101 308.5,104" fill="#a0a0a0"/><g transform="translate(348,40)"><path d="M1,6 C1,2 17,2 17,6 V15 C17,18.5 1,18.5 1,15 Z" fill="#e4e4e4" stroke="#c6c6c6"/><path d="M6,6 V16 M12,6 V16 M6,10 C8,8 10,8 12,10" fill="none" stroke="#c6c6c6"/></g><g transform="translate(386,40)"><path d="M1,4 L9,1 L17,4 V15 L9,18 L1,15 Z" fill="#e4e4e4" stroke="#c6c6c6"/><path d="M5,16 C5,8 9,6 14,6" fill="none" stroke="#cdcdcd" stroke-width="3"/></g><g transform="translate(386,66)"><path d="M1,5 L9,1.5 L17,5 V14 L9,17.5 L1,14 Z" fill="#e4e4e4" stroke="#c6c6c6"/><path d="M5,8 V15 M9,6 V16 M13,8 V15" fill="none" stroke="#c6c6c6" stroke-width="1.2"/></g><g transform="translate(386,92)"><path d="M1,8 L8,4 L10,5 C12,3 14,2 17,3 V12 L9,17 L1,13 Z" fill="#e6e6e6" stroke="#c8c8c8"/><path d="M1,8 L9,12 L17,8 M9,12 V17" fill="none" stroke="#c8c8c8"/></g><g transform="translate(484,40)"><path d="M1,8 C1,3 6,1 11,1 L19,4 V14 L11,18 L1,14 Z" fill="#e6e6e6" stroke="#c6c6c6"/><path d="M1,8 C5,8 10,6 11,1 M11,8 L19,4 M11,8 V18" fill="none" stroke="#c6c6c6"/></g><polygon points="490,101 496,101 493.0,104" fill="#a0a0a0"/><g transform="translate(527,40)"><g fill="#e8e8e8" stroke="#c6c6c6"><rect x="1" y="1" width="6" height="6"/><rect x="10" y="1" width="6" height="6"/><rect x="1" y="10" width="6" height="6"/><rect x="10" y="10" width="6" height="6"/></g></g><polygon points="532,101 538,101 535.0,104" fill="#a0a0a0"/><g transform="translate(563,41)"><path d="M2,14 L10,2 L16,5 L8,17 Z" fill="#e6e6e6" stroke="#c6c6c6"/><path d="M5,14 L12,4" stroke="#c6c6c6"/></g><g transform="translate(563,67)"><path d="M1,6 L7,2 L17,6 V15 L10,17 L1,13 Z" fill="#e0e0e0" stroke="#c8c8c8"/><path d="M1,6 L10,9 L17,6 M10,9 V17" fill="none" stroke="#c8c8c8"/></g><g transform="translate(563,92)"><path d="M1,5 L9,1.5 L17,5 V14 L9,17.5 L1,14 Z" fill="#e4e4e4" stroke="#c6c6c6"/><path d="M5,6 V14 L9,16 L13,14 V6" fill="#f0f0f0" stroke="#c6c6c6"/></g><g transform="translate(627,41)"><path d="M1,4 C1,0.5 17,0.5 17,4 V14 C17,17.5 1,17.5 1,14 Z" fill="#e6e6e6" stroke="#c6c6c6"/><rect x="5" y="7" width="8" height="6" fill="#d6d6d6" stroke="#c6c6c6"/></g><g transform="translate(627,67)"><path d="M2,10 L8,6 L16,9 V15 L9,18 L2,15 Z" fill="#e4e4e4" stroke="#c6c6c6"/><path d="M6,7 V2 L12,0.5 L16,3 V9" fill="#ececec" stroke="#c6c6c6"/></g><g transform="translate(627,92)"><path d="M1,4 L6,2 V15 L1,17 Z M17,4 L12,2 V15 L17,17 Z" fill="#e6e6e6" stroke="#c6c6c6"/><path d="M9,0 V18" stroke="#c0c0c0"/></g><g transform="translate(699,40)"><path d="M1,7 L9,3 L18,7 V14 L10,18 L1,14 Z" fill="#e4e4e4" stroke="#c6c6c6"/><path d="M5,4 L11,1 L16,4 L10,7 Z" fill="#d4d4d4" stroke="#c6c6c6"/></g><g transform="translate(741,40)"><circle cx="4" cy="4" r="2.5" fill="#d8d8d8" stroke="#c4c4c4"/><path d="M8,6 L16,2 V16 L8,19 Z" fill="#e6e6e6" stroke="#c6c6c6"/><path d="M11,4 V18" stroke="#c6c6c6" stroke-dasharray="2 1"/></g><polygon points="748,101 754,101 751.0,104" fill="#a0a0a0"/><g transform="translate(783,40)"><path d="M5,1 C1,5 2,10 6,12 C10,14 11,18 8,19 M12,1 C16,3 17,9 12,12" fill="none" stroke="#cfcfcf" stroke-width="1.6"/></g><polygon points="790,101 796,101 793.0,104" fill="#a0a0a0"/><g transform="translate(834,40)"><path d="M3,6 L17,13 L20,8 L6,1 Z" fill="#f0d020" stroke="#303030" stroke-width="1"/><path d="M6,3.5 L5,5.5 M9,5 L8,7 M12,6.5 L11,8.5 M15,8 L14,10" stroke="#222" stroke-width="0.9"/><path d="M1,10 L14,16.5 L13,20 L21,18 L16,11 L15,14.5 L2,8 Z" fill="#1a78b8"/></g><g transform="translate(883,41)"><path d="M2,6 L9,1 L16,6 V14 L9,18 L2,14 Z" fill="#e6e6e6" stroke="#c6c6c6"/><path d="M2,6 C6,9 12,9 16,6 M9,9 V18" fill="none" stroke="#c6c6c6"/></g><g transform="translate(929,41)"><path d="M1,1 H5 V17 H1 Z M13,1 H17 V17 H13 Z" fill="#e8e8e8" stroke="#c6c6c6"/><path d="M7,12 L10,6 L8,9 L11,4" stroke="#c6c6c6" stroke-width="1.3" fill="none"/></g><g transform="translate(984,41)"><rect x="1" y="1" width="7" height="8" fill="#e6e6e6" stroke="#c6c6c6"/><rect x="9" y="9" width="8" height="8" fill="#e6e6e6" stroke="#c6c6c6"/><path d="M5,11 L7,15" stroke="#c6c6c6"/></g><g transform="translate(1038,41)"><path d="M3,4 L8,1 L12,4 L8,7 Z" fill="#e0e0e0" stroke="#c6c6c6"/><rect x="12" y="1" width="6" height="6" fill="#e8e8e8" stroke="#c6c6c6"/><rect x="1" y="9" width="8" height="8" fill="#e2e2e2" stroke="#c6c6c6"/><ellipse cx="14" cy="13" rx="5" ry="3.5" fill="#e8e8e8" stroke="#c6c6c6"/><circle cx="14" cy="13" r="1.6" fill="#c8c8c8"/></g><g transform="translate(1089,41)"><path d="M8,1 V7 M5,4 L8,1 L11,4" fill="none" stroke="#c6c6c6" stroke-width="1.4"/><ellipse cx="8" cy="13" rx="7" ry="4.5" fill="#e6e6e6" stroke="#c6c6c6"/><path d="M2,11 C5,8 11,8 14,11" fill="#f0f0f0" stroke="#c6c6c6"/></g><g transform="translate(1141,40)"><path d="M1,1 H14 V4.5 H4.5 V15 L15,19 V21.5 L1,17 Z" fill="#1a78b8"/><path d="M6,5 L21,10.5 L19,15.5 L5,10 Z" fill="#f0d020" stroke="#303030" stroke-width="1"/><path d="M9,6.5 L8,8.5 M12,7.5 L11,9.5 M15,8.8 L14,10.8 M18,10 L17,12" stroke="#222" stroke-width="0.9"/></g><g transform="translate(741,122)"><circle cx="11" cy="7.5" r="6.5" fill="#d8e6ee" stroke="#404a50" stroke-width="1.2"/><path d="M11,2.5 L9.5,4.5 H12.5 Z M11,12.5 L9.5,10.5 H12.5 Z M6,7.5 L8,6 V9 Z M16,7.5 L14,6 V9 Z" fill="#222"/><path d="M6.5,12 L1.5,17.5" stroke="#3a7aa0" stroke-width="3"/><path d="M6.5,12 L1.5,17.5" stroke="#a8d8f0" stroke-width="1.2"/></g><g transform="translate(768,122)"><path d="M9.5,0.5 L13,4.5 H11 V8 H14.5 V6 L18.5,9.5 L14.5,13 V11 H11 V14.5 H13 L9.5,18.5 L6,14.5 H8 V11 H4.5 V13 L0.5,9.5 L4.5,6 V8 H8 V4.5 H6 Z" fill="#8ccbea" stroke="#1e5070" stroke-width="1.1" stroke-linejoin="round"/></g><g transform="translate(793,122)"><path d="M2.5,1 V14" stroke="#333" stroke-width="1.6"/><path d="M0,3 L2.5,0 L5,3 Z M0,12 L2.5,15 L5,12 Z" fill="#333"/><circle cx="12" cy="8" r="6" fill="#d0e2ea" stroke="#4a5860" stroke-width="1.2"/><path d="M8,12.5 L3.5,17.5" stroke="#3a7aa0" stroke-width="3"/></g><g transform="translate(819,122)"><rect x="7" y="0.8" width="12" height="12" fill="none" stroke="#222" stroke-width="1.3" stroke-dasharray="2.5 2"/><circle cx="11" cy="8.5" r="6" fill="#d0e2ea" stroke="#4a5860" stroke-width="1.2"/><path d="M7,13 L2,18" stroke="#3a7aa0" stroke-width="3"/></g><g transform="translate(845,122)"><circle cx="12" cy="7" r="6" fill="none" stroke="#7ab0cc" stroke-width="1.2"/><path d="M9.5,5.5 H14.5 M9.5,8.5 H14.5" stroke="#7ab0cc" stroke-width="1.3"/><path d="M8,12 L3,17" stroke="#7ab0cc" stroke-width="2.6"/></g><g transform="translate(872,122)"><path d="M1,12 L13,2 L17,6 L6,17 Z" fill="#e6eef2" stroke="#555" stroke-width="1.1"/><path d="M5,9 L9,13 M9,5 L13,9" stroke="#888"/><path d="M9,14 L13,11 V13 H18 V16 H13 V18 Z" fill="#2c7ab0"/></g><g transform="translate(897,122)"><path d="M13,3.5 C7,1 1.5,5 1.5,10 C1.5,15.5 7,18.5 12,16.5" fill="none" stroke="#1e5a7e" stroke-width="2.6"/><path d="M13,3.5 C7,1 1.5,5 1.5,10 C1.5,15.5 7,18.5 12,16.5" fill="none" stroke="#8ccaea" stroke-width="1"/><path d="M11,0.5 L18,4 L12.5,8 Z" fill="#8ccaea" stroke="#1e5a7e" stroke-width="1"/></g><g transform="translate(923,122)"><path d="M1,15 L8,12 L17,15 L10,18.5 Z" fill="#8cc6e6" stroke="#1e5a7e" stroke-width="1"/><path d="M9,14 V4" stroke="#222" stroke-width="1.8"/><path d="M6,5.5 L9,1 L12,5.5 Z" fill="#222"/></g><g transform="translate(950,122)"><path d="M1,4 C1,0 17,0 17,4 V15 C17,18 1,18 1,15 Z" fill="#7aaecc" stroke="#6aa0c0"/><path d="M6,4 V16 M12,4 V16" stroke="#8ab8d2" stroke-width="2"/></g><g transform="translate(975,122)"><path d="M4.5,0.8 H18.2 V14 L14.5,18.2 H0.8 V4.5 Z" fill="#dceaf2" stroke="#333" stroke-width="1.1"/><rect x="0.8" y="4.5" width="13.7" height="13.7" fill="#5eaad8" stroke="#1e4a6a" stroke-width="1.2"/><path d="M0.8,4.5 L4.5,0.8 M14.5,4.5 L18.2,0.8 M14.5,18.2 L18.2,14" stroke="#333"/><path d="M9.5,1.5 V4 M15.5,9.5 H18" stroke="#222" stroke-width="1.4"/></g><polygon points="1002,127 1008,127 1005.0,130" fill="#8a9ca8"/><g transform="translate(1016,122)"><path d="M2,4 L9,1 L17,3.5 V14.5 L10,18 L2,15 Z" fill="#e8f0f4" stroke="#333" stroke-width="1.1"/><path d="M2,4 L5,6 V17 L2,15 Z" fill="#5aa4d4"/><path d="M5,6 L10,4.5 V18 L5,17 Z" fill="#4a9ad0"/><path d="M5,6 V17 M10,4.5 V18" stroke="#1e4a6a"/></g><polygon points="1042,127 1048,127 1045.0,130" fill="#8a9ca8"/><g transform="translate(1056,122)"><path d="M1,5 L7,1 L17,3 V14 L11,18 L1,16 Z M1,5 L11,7 L17,3 M11,7 V18" fill="#c8dce6" fill-opacity="0.5" stroke="#3a4a52" stroke-width="1"/><path d="M7,1 V12 L1,16 M7,12 L17,14" fill="none" stroke="#3a88b8" stroke-dasharray="2 1.5"/></g><g transform="translate(1083,122)"><path d="M1,5 L7,1 L17,3 V14 L11,18 L1,16 Z" fill="#cfe2ec" stroke="#4a5a62" stroke-width="1.1"/><path d="M1,5 L11,7 L17,3 M11,7 V18" fill="none" stroke="#4a5a62" stroke-width="1.1"/></g><g transform="translate(1108,122)"><path d="M1,5 L8,1 L18,3 V13 L11,17 L1,15 Z" fill="#6ab6de"/><path d="M1,5 L8,1 L18,3 L11,7 Z" fill="#a4d8f0"/><path d="M1,5 L11,7 V17 L1,15 Z" fill="#3c88b8"/></g><rect x="1130" y="119" width="25.5" height="25.5" fill="#56788a" stroke="#222" stroke-width="1.2"/><g transform="translate(1134,122)"><path d="M1,5 L8,1 L18,3 V13 L11,17.5 L1,15 Z" fill="#6ab6de" stroke="#e8f4fa" stroke-width="2"/><path d="M1,5 L8,1 L18,3 L11,7 Z" fill="#a4d8f0"/><path d="M1,5 L11,7 V17.5 L1,15 Z" fill="#2a6a98"/><path d="M1,5 L8,1 L18,3 V13 L11,17.5 L1,15 Z M1,5 L11,7 L18,3 M11,7 V17.5" fill="none" stroke="#0a2a48" stroke-width="1.2"/></g><g transform="translate(1160,123)"><path d="M0.5,9 C4,3 14,3 17.5,9 C14,15 4,15 0.5,9 Z" fill="#dfe6ea" stroke="#8a9aa2"/><circle cx="9" cy="9" r="4" fill="#4a5a62"/><path d="M9,1 V18" stroke="#3a4a52" stroke-width="1.2"/></g><polygon points="1186,127 1192,127 1189.0,130" fill="#8a9ca8"/><g transform="translate(1200,122)"><circle cx="8" cy="8" r="7" fill="#7aaecc"/><path d="M8,18 L18,8 L20,10 L10,20 Z" fill="#8ab8d2" stroke="#6aa0c0"/></g><g transform="translate(1225,122)"><circle cx="9" cy="7" r="6.5" fill="#7aaecc"/><path d="M1,11 H17 V19 H1 Z" fill="#8ab8d2" stroke="#6aa0c0" stroke-dasharray="2 1"/></g><polygon points="1252,127 1258,127 1255.0,130" fill="#8a9ca8"/><g transform="translate(1266,124)"><rect x="0.8" y="0.8" width="17" height="11.5" fill="url(#gmon)" stroke="#2e3a42" stroke-width="1.3"/><rect x="8" y="12.5" width="2.5" height="2.5" fill="#2e3a42"/><rect x="5" y="15" width="8.5" height="1.6" fill="#2e3a42"/></g><polygon points="1292,127 1298,127 1295.0,130" fill="#8a9ca8"/><g transform="translate(1308,123)"><circle cx="7.5" cy="8" r="7" fill="#7ab0ce"/><circle cx="6" cy="6" r="3" fill="#88bcd6"/></g><g transform="translate(1333,123)"><path d="M1,4 L6,1 L15,2 V13 L10,17 L1,15 Z" fill="#7aaecc" stroke="#6aa2c2"/><path d="M1,4 L10,6 L15,2 M10,6 V17" fill="none" stroke="#6aa2c2"/></g><g transform="translate(1358,122)"><circle cx="9" cy="9" r="8" fill="#7aaecc" stroke="#6aa2c2"/><circle cx="10" cy="10" r="3.5" fill="none" stroke="#6aa2c2" stroke-width="1.5"/></g><rect x="1380" y="119" width="26" height="25.5" fill="#56788a" stroke="#222" stroke-width="1.2"/><g transform="translate(1383,122)"><path d="M2,5 L9,2 L17,4 V15 L10,18.5 L2,16 Z" fill="#d4dce0" stroke="#333" stroke-width="1.1"/><path d="M2,5 L10,7 L17,4 M10,7 V18.5" fill="none" stroke="#333"/><path d="M12,1 L19,0.5 L15,5 L18,5 L10,13 L12,7 L9,7 Z" fill="#f6d21a" stroke="#d04010" stroke-width="0.9"/></g><g transform="translate(1790,125)"><rect x="0.5" y="0.5" width="12" height="13" fill="none" stroke="#4a6a7a" stroke-width="1"/><path d="M3,7 L6.5,4 V10 Z" fill="#4a6a7a"/></g><g transform="translate(1816,125)"><rect x="0.5" y="0.5" width="12" height="13" fill="none" stroke="#4a6a7a" stroke-width="1"/><path d="M9.5,7 L6,4 V10 Z" fill="#4a6a7a"/></g><rect x="1843" y="136" width="10" height="2" fill="#4a6a7a"/><g transform="translate(1867,125)"><path d="M5,3 V0.5 H14.5 V8 H10" fill="none" stroke="#4a6a7a"/><rect x="0.5" y="5" width="9.5" height="8.5" fill="none" stroke="#4a6a7a"/></g><g transform="translate(1895,127)"><path d="M0.5,0.5 L10,10 M10,0.5 L0.5,10" stroke="#4a6a7a" stroke-width="1.1"/></g><g transform="translate(1817,153)"><path d="M2,12 L10,20 L27,3" fill="none" stroke="#5aae9a" stroke-width="6" stroke-opacity="0.8"/></g><g transform="translate(1862,182)"><path d="M3,3 L22,22 M22,3 L3,22" stroke="#6a8aa8" stroke-width="6" stroke-opacity="0.75"/></g><rect x="1894.5" y="168.5" width="26" height="167" fill="#d8d8d8" stroke="#8a8a8a"/><rect x="1895" y="169" width="25" height="23" fill="#fafafa"/><rect x="1895" y="192" width="25" height="1" fill="#9a9a9a"/><rect x="1895" y="216" width="25" height="1" fill="#9a9a9a"/><rect x="1895" y="240" width="25" height="1" fill="#9a9a9a"/><rect x="1895" y="264" width="25" height="1" fill="#9a9a9a"/><rect x="1895" y="289" width="25" height="1" fill="#9a9a9a"/><rect x="1895" y="313" width="25" height="1" fill="#9a9a9a"/><g transform="translate(1898,171)"><path d="M1,9 L9,1.5 L17,9" fill="none" stroke="#1a5a8a" stroke-width="2.2"/><path d="M4,8 V17.5 H14 V8" fill="#fff" stroke="#222" stroke-width="1.2"/><rect x="7.5" y="11.5" width="3.5" height="6" fill="none" stroke="#222"/></g><g transform="translate(1899,195)"><path d="M1,4 L4,2 V16 L1,17 Z M5,3 L8,1.5 V16 L5,17 Z M9,2.5 L12,1 V15.5 L9,16.5 Z M13,2 L16,3 V15 L13,16 Z" fill="#f4f4f4" stroke="#333" stroke-width="1"/></g><g transform="translate(1898,220)"><path d="M1,3 H7 L9,5 H16 V16 H1 Z" fill="#e8e8e8" stroke="#333" stroke-width="1"/><path d="M1,16 L4,8 H19 L16,16 Z" fill="#fafafa" stroke="#333" stroke-width="1"/></g><g transform="translate(1898,243)"><rect x="0.5" y="0.5" width="18" height="17" fill="#f0f0f0" stroke="#333"/><path d="M3,4 H10 V7 H8 V12 H11 V14 H4 V12 H6.5 V7 H3 Z" fill="#f4c20a" stroke="#a07800" stroke-width="0.6"/><rect x="12" y="3" width="4" height="4" fill="#f4c20a"/><rect x="12.5" y="9" width="3" height="6" fill="#999"/></g><g transform="translate(1898,267)"><circle cx="9.5" cy="9.5" r="8.5" fill="#e82020"/><path d="M9.5,1 A8.5,8.5 0 0 0 1,9.5 H9.5 Z" fill="#2a5adc"/><path d="M1,9.5 A8.5,8.5 0 0 0 9.5,18 V9.5 Z" fill="#22aa22"/><path d="M9.5,18 A8.5,8.5 0 0 0 18,9.5 H9.5 Z" fill="#f0c010"/><ellipse cx="7" cy="5" rx="3" ry="2" fill="#fff" fill-opacity="0.6"/></g><g transform="translate(1898,292)"><rect x="0.5" y="0.5" width="18" height="17" fill="#fafafa" stroke="#333"/><rect x="1" y="1" width="17" height="3" fill="#2a7ab8"/><g fill="#2a7ab8"><rect x="3" y="6" width="3" height="2"/><rect x="3" y="10" width="3" height="2"/><rect x="3" y="14" width="3" height="2"/></g><path d="M8,7 H16 M8,11 H16 M8,15 H16" stroke="#333"/></g><g transform="translate(1898,316)"><path d="M1,1 H12 V9 H6 L3,12 V9 H1 Z" fill="#5ab4e6" stroke="#1a4a6a"/><path d="M7,6 H18 V14 H16 V17 L13,14 H7 Z" fill="#f4f4f4" stroke="#333"/></g><g transform="translate(11,167)"><path d="M1,8.5 L6,6 V2.5 L10,0.8 L14.5,3 V8 L17,9.3 V13.8 L11,17.2 L1,12.2 Z" fill="#f2d43a" stroke="#5a4600" stroke-width="1"/><path d="M1,8.5 L11,13.5 L17,10.5 M11,13.5 V17.2 M6,2.5 L10.5,4.8 L14.5,3 M10.5,4.8 V10.2 L6,8 V6 M10.5,10.2 L14.5,8" fill="none" stroke="#5a4600" stroke-width="0.9"/><path d="M6,2.5 L10,0.8 L14.5,3 L10.5,4.8 Z" fill="#fff090"/></g><g transform="translate(52,167)"><rect x="0.7" y="0.7" width="17.6" height="17.6" rx="1.5" fill="#fafafa" stroke="#1e2a32" stroke-width="1.4"/><rect x="1.4" y="1.4" width="16.2" height="2.8" fill="#2a6a98"/><g fill="#2a6a98"><rect x="3" y="6" width="3.5" height="2.3"/><rect x="3" y="10" width="3.5" height="2.3"/><rect x="3" y="14" width="3.5" height="2.3"/></g><path d="M8,7.2 H16 M8,11.2 H16 M8,15.2 H16" stroke="#222" stroke-width="1.2"/></g><g transform="translate(94,167)"><path d="M2,1 V18 M2,9 H7 M2,17 H7 M2,2 H6" stroke="#111" stroke-width="1.5" fill="none"/><rect x="7" y="4" width="6.5" height="6.5" fill="#fff" stroke="#111" stroke-width="1.2"/><rect x="9" y="11.5" width="6.5" height="6.5" fill="#fff" stroke="#111" stroke-width="1.2"/></g><g transform="translate(133,167)"><circle cx="9" cy="9" r="6.5" fill="none" stroke="#111" stroke-width="1.8"/><path d="M9,0.5 V17.5 M0.5,9 H17.5" stroke="#111" stroke-width="1.8"/></g><g transform="translate(173,166)"><circle cx="9.5" cy="9.5" r="8.8" fill="#e02424"/><path d="M9.5,0.7 A8.8,8.8 0 0 0 0.7,9.5 H9.5 Z" fill="#2458d8"/><path d="M0.7,9.5 A8.8,8.8 0 0 0 9.5,18.3 V9.5 Z" fill="#1ea83c"/><path d="M9.5,18.3 A8.8,8.8 0 0 0 18.3,9.5 H9.5 Z" fill="#f2c418"/><ellipse cx="13" cy="5.5" rx="2.3" ry="3.8" transform="rotate(-25 13 5.5)" fill="#111"/><ellipse cx="6" cy="4.5" rx="2.5" ry="1.6" fill="#fff" fill-opacity="0.55"/></g><g transform="translate(10,196) scale(1)"><path d="M1.5,6 C1.5,2.5 6,1 10,1 L17,3.5 V13 L10,17 L1.5,13.5 Z" fill="#f2f2f2" stroke="#333" stroke-width="1"/><path d="M1.5,6 C5,6.5 9,5.5 10,1 L17,3.5 C16,8 12,9 9,9" fill="#3c8cc0" stroke="#1a3a52" stroke-width="0.9"/><path d="M9,9 V17 M9,9 L17,6" fill="none" stroke="#333" stroke-width="0.9"/><path d="M9,9 L17,6 V13 L9,17 Z" fill="#d8d8d8" fill-opacity="0.7"/></g><g transform="translate(201,198)"><circle cx="7" cy="7" r="6.4" fill="#fafafa" stroke="#333" stroke-width="1.1"/><path d="M4.8,5.3 C4.8,2.6 9.2,2.6 9.2,5.3 C9.2,7 7,7 7,8.8" fill="none" stroke="#1a6aa8" stroke-width="1.6"/><circle cx="7" cy="10.8" r="1" fill="#1a6aa8"/></g><g transform="translate(8,225)"><path d="M1,7 L5,11 L13,2" fill="none" stroke="#2a9a2a" stroke-width="2.4"/></g><g transform="translate(36,226)"><path d="M1,1 L11,11 M11,1 L1,11" stroke="#d81e1e" stroke-width="2"/></g><g transform="translate(61,225)"><path d="M0,7 H6" stroke="#8a8a8a" stroke-width="1.4"/><path d="M6,2.5 L9,4.5 H12.5 L14.5,2 V12 L12.5,9.5 H9 L6,11.5 Z" fill="#8c8c8c"/></g><g transform="translate(191,289)"><path d="M1,5.5 L5.5,1.5 L10,5.5" fill="none" stroke="#666" stroke-width="1.6"/></g><g transform="translate(191,366)"><path d="M1,5.5 L5.5,1.5 L10,5.5" fill="none" stroke="#666" stroke-width="1.6"/></g><g transform="translate(191,579)"><path d="M1,5.5 L5.5,1.5 L10,5.5" fill="none" stroke="#666" stroke-width="1.6"/></g><g transform="translate(191,779)"><path d="M1,5.5 L5.5,1.5 L10,5.5" fill="none" stroke="#666" stroke-width="1.6"/></g><g transform="translate(191,746)"><path d="M1,1.5 L5.5,5.5 L10,1.5" fill="none" stroke="#666" stroke-width="1.6"/></g><g transform="translate(24,313) scale(1.3)"><path d="M2,6 C2,3 6,1.5 10,1.5 L18,4 V15 L10,19 L2,15.5 Z" fill="#f4f4f4" stroke="#222" stroke-width="1"/><path d="M2,6 C6,7 9.5,6 10,1.5 L18,4 C17.5,8 13,9.5 10,9.5 Z" fill="#3c8cc0" stroke="#1a3a52" stroke-width="0.9"/><path d="M10,9.5 V19 M10,9.5 L18,6.5" stroke="#222" stroke-width="0.9" fill="none"/></g><g transform="translate(61,313) scale(1.3)"><path d="M2,4 L10,1.5 L18,4 V15 L10,19 L2,15.5 Z" fill="#f4f4f4" stroke="#222" stroke-width="1"/><path d="M10,9 C13,8 15,5 18,4 V11 C15,11 12,12 10,13 Z" fill="#3c8cc0" stroke="#1a3a52" stroke-width="0.9"/><path d="M2,4 L10,6.5 V19" stroke="#222" stroke-width="0.9" fill="none"/></g><g transform="translate(98,313) scale(1.3)"><path d="M2,5 C2,2.5 6,1.5 9,1.5 L18,4 V15 L10,19 L2,15.5 Z" fill="#f4f4f4" stroke="#222" stroke-width="1"/><path d="M6,4 C9,3 10,2 10,1.5 L18,4 C18,6 16,8 14,9 V19 L10,19 V10 C10,7 8,5 6,4 Z" fill="#3c8cc0" stroke="#1a3a52" stroke-width="0.9"/></g><g transform="translate(136,313) scale(1.3)"><ellipse cx="10" cy="4" rx="8.5" ry="3" fill="#bfe4f6" stroke="#222" stroke-width="1"/><path d="M1.5,4 V15.5 C1.5,19.5 18.5,19.5 18.5,15.5 V4" fill="#3c8cc0" stroke="#1a3a52" stroke-width="1"/><path d="M1.5,4 C4,6 6,8 6,12 V18" fill="none" stroke="#222" stroke-width="0.8"/><path d="M2,5 C3,8 4,10 4,17" stroke="#f4f4f4" stroke-width="2.5" fill="none"/></g><g transform="translate(12,387)"><path d="M2,4 L9,1 L16,4 V13 L9,17 L2,13.5 Z" fill="#f4f4f4" stroke="#333" stroke-width="1"/><path d="M2,4 L9,7 L16,4 M9,7 V17" fill="none" stroke="#333" stroke-width="0.9"/><path d="M4.5,6.5 V15" stroke="#1a7ac8" stroke-width="2"/></g><g transform="translate(41,801)"><path d="M2,4 L9,1 L16,4 V13 L9,17 L2,13.5 Z" fill="#f4f4f4" stroke="#333" stroke-width="1"/><path d="M2,4 L9,7 L16,4 M9,7 V17" fill="none" stroke="#333" stroke-width="0.9"/><path d="M4.5,6.5 V15" stroke="#1a7ac8" stroke-width="2"/></g><g transform="translate(41,455)"></g><path d="M41.5,459 L44.5,462 L50,456" fill="none" stroke="#fff" stroke-width="1.3"/><g transform="translate(41,455)"></g><path d="M41.5,483 L44.5,486 L50,480" fill="none" stroke="#fff" stroke-width="1.3"/><g transform="translate(176,604)"><path d="M1,1.5 L5,5.5 L9,1.5" fill="none" stroke="#555" stroke-width="1.1"/></g><g transform="translate(176,713)"><path d="M1,1.5 L5,5.5 L9,1.5" fill="none" stroke="#555" stroke-width="1.1"/></g><g transform="translate(177,857)"><path d="M1,1.5 L5,5.5 L9,1.5" fill="none" stroke="#bbb" stroke-width="1.1"/></g><g transform="translate(177,939)"><path d="M1,1.5 L5,5.5 L9,1.5" fill="none" stroke="#bbb" stroke-width="1.1"/></g><g transform="translate(175,631)"><path d="M2.5,5 L6,1.5 L9.5,5 Z M2.5,10 L6,13.5 L9.5,10 Z" fill="#111"/><path d="M0,7.5 H12" stroke="#b0b0b0"/></g><g transform="translate(187,882)"><path d="M2.5,5 L6,1.5 L9.5,5 Z M2.5,10 L6,13.5 L9.5,10 Z" fill="#111"/><path d="M0,7.5 H12" stroke="#b0b0b0"/></g><g transform="translate(11,628)"><path d="M1.5,18 C1.5,10 6,4 13,2" fill="none" stroke="#2a7ab0" stroke-width="1.8"/><path d="M7,7 L17,16" stroke="#111" stroke-width="1.8"/><path d="M5,5 L11,6.5 L6.5,11 Z" fill="#111"/></g><g transform="translate(12,880)"><path d="M9,1 L17,9 L9,17 L1,9 Z" fill="none" stroke="#2a7ab0" stroke-width="1.4"/><rect x="7" y="9" width="11" height="9" fill="#f7f7f7"/><text x="8" y="17" font-family="Liberation Sans" font-weight="bold" font-size="8" fill="#111">D1</text><path d="M3,7 L8,2" stroke="#111" stroke-width="1.4"/><path d="M2,8.5 L3,4 L6.5,7 Z M9,0.5 L5,1.5 L8,4.5 Z" fill="#111"/></g><g transform="translate(262,862)"><path d="M8,43 V15" stroke="#187018" stroke-width="3.5"/><path d="M8,43 V15" stroke="#7ada7a" stroke-width="1"/><path d="M4,18 L8,8 L12,18 Z" fill="#2a9a2a"/><text x="4.5" y="6.5" font-family="Liberation Sans" font-size="7" fill="#1a8a1a">Y</text><path d="M10,43 H36" stroke="#d01010" stroke-width="3.5"/><path d="M32,39 L44,43 L32,47 Z" fill="#e01818"/><text x="40" y="38" font-family="Liberation Sans" font-size="7" fill="#e83030">X</text><circle cx="9" cy="46" r="4" fill="#1010d0"/></g><path d="M234.5,148.5 L239.5,153 L234.5,157.5 Z" fill="#222"/><g transform="translate(253,145)"><path d="M1,8.5 L6,6 V2.5 L10,0.8 L14.5,3 V8 L17,9.3 V13.8 L11,17.2 L1,12.2 Z" fill="#f2d43a" stroke="#5a4600" stroke-width="1"/><path d="M1,8.5 L11,13.5 L17,10.5 M11,13.5 V17.2 M6,2.5 L10.5,4.8 L14.5,3 M10.5,4.8 V10.2 L6,8 V6 M10.5,10.2 L14.5,8" fill="none" stroke="#5a4600" stroke-width="0.9"/><path d="M6,2.5 L10,0.8 L14.5,3 L10.5,4.8 Z" fill="#fff090"/></g><g transform="translate(2,966)"><g fill="#8a8a8a"><rect x="3" y="3" width="1.5" height="8"/><path d="M12,3 V11 L6,7 Z"/><path d="M26,3 V11 L20,7 Z"/><path d="M35,3 V11 L41,7 Z"/><path d="M49,3 V11 L55,7 Z"/><rect x="56" y="3" width="1.5" height="8"/></g><g fill="#9c9c9c"><rect x="16" y="0" width="1" height="14"/><rect x="32" y="0" width="1" height="14"/><rect x="47" y="0" width="1" height="14"/></g></g><g fill="#9a9a9a"><rect x="4" y="986.0" width="2" height="2"/><rect x="4" y="989.5" width="2" height="2"/><rect x="4" y="993.0" width="2" height="2"/><rect x="4" y="996.5" width="2" height="2"/><rect x="4" y="1000.0" width="2" height="2"/><rect x="4" y="1003.5" width="2" height="2"/><rect x="4" y="1007.0" width="2" height="2"/><rect x="4" y="1010.5" width="2" height="2"/></g><g transform="translate(21,992)"><path d="M0.5,0.5 H11.5 L7.5,5.5 V11.5 H4.5 V5.5 Z" fill="#ebebeb" stroke="#c8c8c8"/></g><g transform="translate(45,988)"><path d="M0.5,0.5 H10.5 L7,4.5 V9 H4 V4.5 Z M4,3.5 H14.5 L11,7.5 V12 H8 V7.5 Z M8,6.5 H18.5 L15,10.5 V16 H12 V10.5 Z" fill="#f2f2f2" stroke="#c4c4c4"/></g><g transform="translate(72,988)"><path d="M0.5,0.5 H10.5 L7,4.5 V9 H4 V4.5 Z M4,3.5 H14.5 L11,7.5 V12 H8 V7.5 Z M8,6.5 H18.5 L15,10.5 V16 H12 V10.5 Z" fill="#e6a0f2" stroke="#6a1a8a" stroke-width="1.1"/></g><g transform="translate(102,988)"><path d="M1,0.8 L12,11 L7.5,11.5 L10,16.5 L8,17.5 L5.5,12.5 L1,16 Z" fill="#fafafa" stroke="#c4c4c4" stroke-width="1"/></g><polygon points="128,996 134,996 131.0,999" fill="#888"/><g transform="translate(143,988)"><path d="M1,0.8 L12,11 L7.5,11.5 L10,16.5 L8,17.5 L5.5,12.5 L1,16 Z" fill="#f4f4f4" stroke="#c4c4c4"/><path d="M7,1 L17,10 L13,12 L15,17" stroke="#c8c8c8" stroke-width="3" fill="none"/></g><rect x="168" y="987" width="1" height="22" fill="#8a8a8a"/><g transform="translate(181,989)"><circle cx="3.5" cy="4.5" r="2.7" fill="#5ab0e0" stroke="#1a4a6a"/></g><use href="#funnel" x="190" y="999" width="7" height="7"/><g transform="translate(205,989)"><path d="M2,0 V14" stroke="#1a5a8a" stroke-width="2"/></g><use href="#funnel" x="214" y="999" width="7" height="7"/><g transform="translate(231,989)"><rect x="1" y="1" width="12" height="11" fill="#5ab0e0" stroke="#1a3a52"/><path d="M1,12 L13,12 L13,1" stroke="#1a3a52" stroke-width="1.5" fill="none"/></g><use href="#funnel" x="240" y="999" width="7" height="7"/><g transform="translate(258,989)"><path d="M1,6 C4,1 8,1 11,4 C14,1 16,3 17,5 L14,13 C11,10 8,11 5,14 Z" fill="#5ab0e0" stroke="#1a3a52"/></g><use href="#funnel" x="267" y="999" width="7" height="7"/><g transform="translate(285,989)"><path d="M1,4 L8,1 L15,4 V12 L8,15 L1,12 Z" fill="#6ab8e4" stroke="#1a3a52"/><path d="M1,4 L8,7 L15,4 M8,7 V15" fill="none" stroke="#1a3a52"/></g><use href="#funnel" x="294" y="999" width="7" height="7"/><g transform="translate(312,989)"><path d="M1,13 L14,1" stroke="#1a5a8a" stroke-width="1.5" stroke-dasharray="2 1.5"/></g><use href="#funnel" x="321" y="999" width="7" height="7"/><g transform="translate(338,989)"><path d="M2,3 L7,1 V13 L2,15 Z M8,2 L13,1 V14 L8,15 Z" fill="#8ac4e8" stroke="#1a3a52"/><path d="M7,0 V16" stroke="#111" stroke-dasharray="2 1"/></g><use href="#funnel" x="347" y="999" width="7" height="7"/><g transform="translate(365,989)"><rect x="1" y="3" width="5" height="5" fill="#5ab0e0" stroke="#1a3a52"/></g><use href="#funnel" x="374" y="999" width="7" height="7"/><g transform="translate(394,989)"><path d="M1,14 V2 H12" fill="none" stroke="#1a5a8a" stroke-width="1.6"/><path d="M12,2 C14,2 14,4 14,6" fill="none" stroke="#1a5a8a"/></g><use href="#funnel" x="403" y="999" width="7" height="7"/><g transform="translate(421,989)"><path d="M2,2 V14 M2,2 H12 V5" stroke="#222" stroke-width="1.3" fill="none"/><rect x="0" y="0" width="4" height="4" fill="#fff" stroke="#333"/><rect x="10" y="0" width="4" height="4" fill="#fff" stroke="#333"/><rect x="0" y="12" width="4" height="4" fill="#fff" stroke="#333"/></g><use href="#funnel" x="430" y="999" width="7" height="7"/><g transform="translate(448,989)"><path d="M1,14 L14,2" stroke="#1a6aa8" stroke-width="1.6"/><circle cx="4" cy="11" r="1.5" fill="#111"/><circle cx="11" cy="5" r="1.5" fill="#111"/></g><use href="#funnel" x="457" y="999" width="7" height="7"/><g transform="translate(475,989)"><circle cx="8" cy="8" r="5" fill="none" stroke="#111" stroke-width="1.3"/><circle cx="8" cy="8" r="2" fill="#1a6aa8"/><path d="M8,0 V16 M0,8 H16" stroke="#111"/></g><use href="#funnel" x="484" y="999" width="7" height="7"/><g transform="translate(502,989)"><rect x="3" y="1" width="10" height="13" fill="#f4f4f4" stroke="#555"/><path d="M0,7 H16" stroke="#1a6aa8" stroke-dasharray="2 1"/></g><use href="#funnel" x="511" y="999" width="7" height="7"/><g transform="translate(529,989)"><path d="M1,6 L8,1 L14,6 L8,11 Z" fill="#f4f4f4" stroke="#111" stroke-width="1.4"/><path d="M4,6 L8,3 L11,6" stroke="#111" fill="none"/></g><use href="#funnel" x="538" y="999" width="7" height="7"/><g transform="translate(556,989)"><path d="M1,7 L4,14 L13,0" fill="none" stroke="#111" stroke-width="1.4"/></g><use href="#funnel" x="565" y="999" width="7" height="7"/><g transform="translate(583,989)"><rect x="1" y="2" width="16" height="8" fill="#fff" stroke="#333"/><rect x="3" y="4" width="4" height="4" fill="none" stroke="#333"/><text x="8" y="9" font-size="6" font-family="Liberation Sans" fill="#111">03</text></g><use href="#funnel" x="592" y="999" width="7" height="7"/><g transform="translate(610,989)"><circle cx="8" cy="6" r="5.5" fill="#fff" stroke="#111" stroke-width="1.2"/><text x="5" y="9" font-size="7" font-family="Liberation Sans" fill="#111">N</text><path d="M4,10 L0,15" stroke="#111" stroke-width="1.6"/></g><use href="#funnel" x="619" y="999" width="7" height="7"/><g transform="translate(636,989)"><rect x="1" y="1" width="12" height="11" fill="#fff" stroke="#222"/><text x="3" y="10" font-size="9" font-family="Liberation Sans" fill="#111">A</text><path d="M4,12 L7,15 L10,12 Z" fill="#111"/></g><use href="#funnel" x="645" y="999" width="7" height="7"/><g transform="translate(664,989)"><path d="M1,12 L5,4 L8,9 L12,3 L15,4" fill="none" stroke="#111" stroke-width="1.3"/><path d="M9,0 V14" stroke="#111"/></g><use href="#funnel" x="673" y="999" width="7" height="7"/><g transform="translate(690,989)"><path d="M1,12 H12 M1,12 V2 M1,6 L8,12" stroke="#111" stroke-width="1.1" fill="none"/><path d="M3,14 C4,16 6,16 7,14 M8,14 C9,16 11,16 12,14" stroke="#111" fill="none"/></g><use href="#funnel" x="699" y="999" width="7" height="7"/><g transform="translate(717,989)"><circle cx="8" cy="7" r="5.5" fill="none" stroke="#111" stroke-width="1.1"/><text x="4" y="10" font-size="7" font-family="Liberation Sans" fill="#111">A</text><path d="M4,11 L0,15" stroke="#111" stroke-width="1.5"/></g><use href="#funnel" x="726" y="999" width="7" height="7"/><g transform="translate(744,989)"><rect x="2" y="0" width="11" height="12" fill="#f0f0f0" stroke="#555"/><path d="M2,12 L7.5,16 L13,12" fill="#ddd" stroke="#555"/><path d="M5,2 V10 M10,2 V10" stroke="#999" stroke-dasharray="1 1"/></g><use href="#funnel" x="753" y="999" width="7" height="7"/><g transform="translate(771,989)"><rect x="1" y="1" width="12" height="11" fill="#fff" stroke="#222"/><text x="3" y="10" font-size="9" font-family="Liberation Sans" fill="#111">A</text><circle cx="12" cy="2" r="1.5" fill="none" stroke="#111"/></g><use href="#funnel" x="780" y="999" width="7" height="7"/><g transform="translate(798,989)"><circle cx="8" cy="8" r="7" fill="#fff" stroke="#111"/><path d="M8,1 A7,7 0 0 1 15,8 H8 Z M8,15 A7,7 0 0 1 1,8 H8 Z" fill="#111"/></g><use href="#funnel" x="807" y="999" width="7" height="7"/><g transform="translate(826,989)"><path d="M0,5 H10" stroke="#111" stroke-width="1.3"/><rect x="9" y="1" width="8" height="7" fill="#5ab0e0" stroke="#1a3a52"/></g><use href="#funnel" x="835" y="999" width="7" height="7"/><g transform="translate(853,989)"><path d="M0,5 H18" stroke="#111" stroke-width="1.3"/><rect x="5" y="1" width="8" height="7" fill="#5ab0e0" stroke="#1a3a52"/></g><use href="#funnel" x="862" y="999" width="7" height="7"/><g transform="translate(879,989)"><rect x="1" y="2" width="14" height="11" fill="#5ab0e0" stroke="#1a3a52" stroke-width="1.2"/><path d="M10,2 L13,0 L17,3 L14,6 Z" fill="#fff" stroke="#333"/></g><use href="#funnel" x="888" y="999" width="7" height="7"/><g transform="translate(906,989)"><path d="M1,0 V15" stroke="#1a5a8a" stroke-width="1.8"/><path d="M4,8 L9,4 L13,6 L8,10 Z M7,3 L11,1 L14,3 L10,5 Z" fill="#fff" stroke="#333" stroke-width="0.9"/></g><use href="#funnel" x="915" y="999" width="7" height="7"/><g transform="translate(933,989)"><path d="M4,8 L9,4 L13,6 L8,10 Z M7,3 L11,1 L14,3 L10,5 Z" fill="#fff" stroke="#333" stroke-width="0.9"/><circle cx="1.5" cy="5" r="1.7" fill="#5ab0e0" stroke="#1a3a52"/></g><use href="#funnel" x="942" y="999" width="7" height="7"/><rect x="964" y="987" width="1" height="22" fill="#8a8a8a"/><g transform="translate(1899,1016)"><path d="M1,6 L7,1 L14,4 V10 L8,14 L1,10 Z" fill="#f4f4f4" stroke="#333"/><path d="M4,7 L10,4 M5,10 L11,7" stroke="#333"/></g><polygon points="1868,1021 1873,1021 1870.5,1024" fill="#666"/><g fill="none" stroke="#111" stroke-width="2.1" stroke-linecap="round" stroke-linejoin="round"><polyline points="1332.8,846.4 1321.9,862.8 1339.0,866.0 1320.3,875.3"/><polyline points="1350.0,860.5 1339.8,862.8 1346.9,866.7 1339.0,873.0 1353.0,870.6"/><polyline points="1356.2,871.4 1357.8,862.0 1365.6,869.8 1367.2,860.5"/><polyline points="1387.5,848.0 1375.0,864.4 1395.3,865.2 1375.0,876.9"/><polyline points="1397.7,869.8 1401.6,861.2 1409.4,868.3 1410.9,860.5"/><polyline points="1429.7,861.2 1436.0,868.3 1443.8,862.0 1450.0,867.5 1479.7,847.2"/><polyline points="1517.0,842.5 1504.7,862.8 1518.8,863.6 1503.9,871.4"/><polyline points="1539.0,851.9 1537.5,874.5"/><polyline points="1532.8,853.4 1546.9,850.3"/><polyline points="1534.4,864.4 1543.8,862.8"/><polyline points="1548.4,853.4 1565.6,850.3"/><polyline points="1560.9,851.0 1561.7,869.8"/><polyline points="1568.8,858.9 1576.6,867.5 1584.4,859.7 1590.6,867.5 1600.0,858.0"/><polyline points="1600.3,862.8 1605.0,842.5 1616.7,874.5"/><polyline points="1603.4,858.1 1611.2,856.6"/><polyline points="1619.8,865.9 1622.2,845.6 1634.7,847.2 1631.6,855.0 1625.3,857.3"/><polyline points="1626.9,856.6 1645.6,863.6"/><polyline points="1661.2,846.4 1648.8,848.0 1650.3,856.6 1644.0,863.6 1670.6,861.2"/><polyline points="1650.3,856.6 1659.7,855.0"/><polyline points="1323.4,895.6 1318.8,919.0"/><polyline points="1314.0,892.5 1329.7,891.0 1331.2,898.8 1321.9,905.0"/><polyline points="1336.0,911.2 1336.7,894.0"/><polyline points="1331.2,892.5 1345.3,892.5 1343.8,900.3 1336.0,903.4"/><polyline points="1337.5,901.9 1353.0,911.2"/><polyline points="1353.0,895.6 1361.0,894.0"/><polyline points="1357.0,894.0 1357.0,908.0"/><polyline points="1353.0,908.0 1362.5,906.6"/><polyline points="1367.2,908.0 1368.8,895.6 1379.7,908.0 1381.2,894.0"/><polyline points="1398.4,895.6 1389.0,897.2 1387.5,905.0 1400.0,906.6"/><polyline points="1409.4,894.0 1417.2,893.3"/><polyline points="1414.0,894.0 1415.6,908.0"/><polyline points="1411.0,908.0 1421.9,907.3"/><polyline points="1431.2,895.6 1429.7,912.8"/><polyline points="1429.7,895.6 1440.6,892.5 1442.2,898.8 1432.8,903.4"/><polyline points="1443.8,905.0 1451.6,884.7 1468.8,925.3 1453.0,906.6 1456.2,903.4"/><polyline points="1468.8,895.6 1470.3,906.6 1482.8,906.6"/><polyline points="1507.8,889.4 1512.5,888.6"/><polyline points="1509.4,892.5 1508.6,905.0"/><polyline points="1503.0,905.0 1514.0,903.4"/><polyline points="1517.2,905.0 1518.8,894.0 1528.0,903.4 1529.7,892.5"/><polyline points="1532.8,894.0 1539.0,905.0 1548.4,883.0"/><polyline points="1565.6,892.5 1550.0,894.0 1548.4,904.2 1575.0,902.6"/><polyline points="1551.6,898.8 1562.5,897.2"/><polyline points="1600.0,881.6 1587.5,895.6 1600.0,900.3 1578.0,916.0"/><polyline points="1600.3,883.0 1619.0,881.6"/><polyline points="1611.2,883.0 1608.0,920.6"/><polyline points="1619.0,894.0 1628.4,892.5"/><polyline points="1623.8,892.5 1623.0,906.6"/><polyline points="1619.0,906.6 1631.6,905.0"/><polyline points="1648.8,889.4 1637.8,892.5 1636.2,903.4 1648.8,905.0 1650.3,897.2 1644.0,897.2"/><polyline points="1659.7,903.4 1662.8,881.6 1684.7,930.0 1667.5,908.0"/><polyline points="1684.7,889.4 1703.4,884.7"/><polyline points="1692.5,886.2 1691.0,905.0"/><polyline points="1720.6,881.6 1717.5,908.0"/><polyline points="1717.5,881.6 1736.2,878.4 1737.8,887.8 1722.2,895.6"/><polyline points="1726.9,895.6 1747.2,905.8"/><polyline points="1770.6,880.0 1758.0,908.0"/><polyline points="1783.0,878.4 1797.2,876.9"/><polyline points="1792.5,876.9 1794.0,908.0 1783.0,928.4"/><polyline points="1836.2,880.0 1819.0,881.6 1819.0,898.8 1845.6,898.8"/><polyline points="1820.6,889.4 1833.0,887.8"/><ellipse cx="1418.75" cy="865.2" rx="5.5" ry="4.2"/><ellipse cx="1525" cy="864.4" rx="5" ry="4"/><ellipse cx="1706.6" cy="894" rx="5" ry="6"/><ellipse cx="1809.7" cy="889.4" rx="5" ry="5"/></g><circle cx="1856.6" cy="901" r="1" fill="#333"/></svg>
</body></html>
